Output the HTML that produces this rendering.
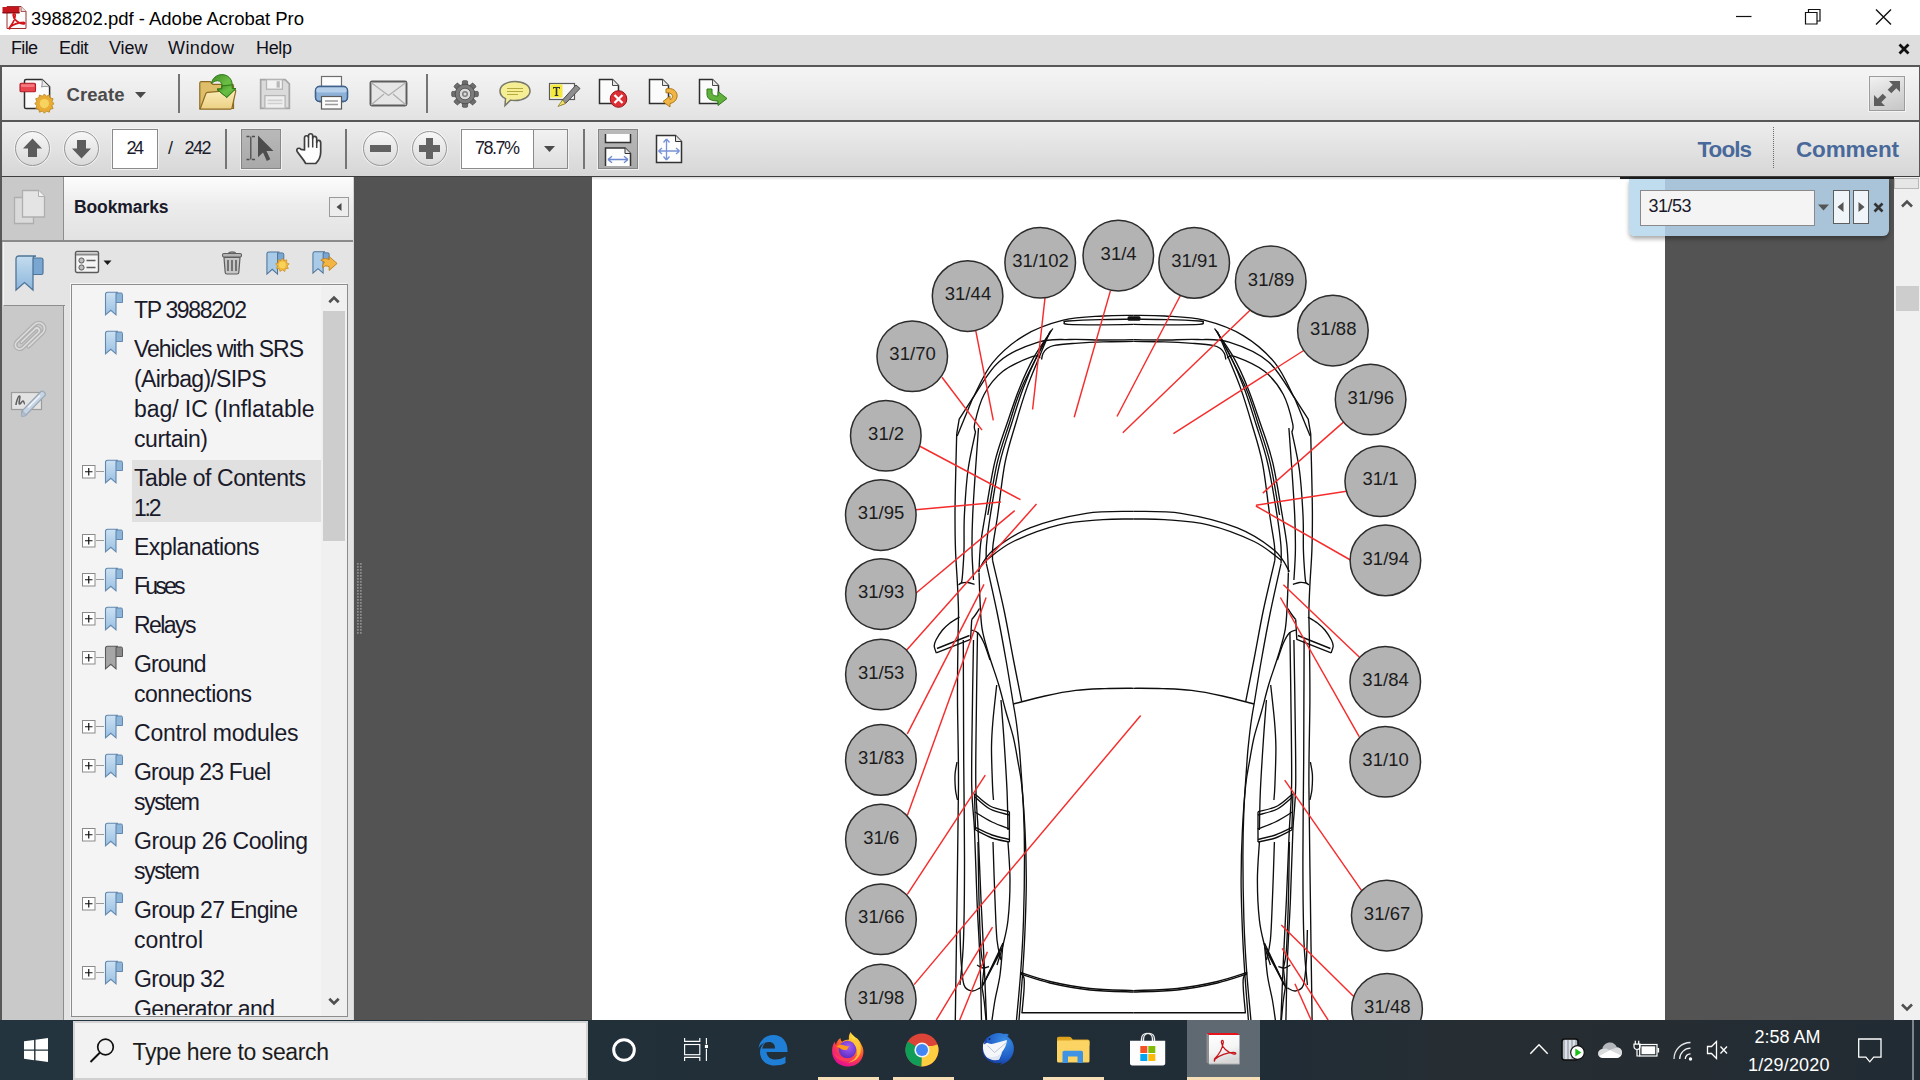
<!DOCTYPE html>
<html>
<head>
<meta charset="utf-8">
<title>3988202.pdf - Adobe Acrobat Pro</title>
<style>
*{box-sizing:border-box;margin:0;padding:0}
html,body{width:1920px;height:1080px;overflow:hidden;background:#fff;font-family:"Liberation Sans",sans-serif;}
#root{position:relative;width:1920px;height:1080px;overflow:hidden}
#root div,#root svg,#root span{position:absolute}
.t{white-space:pre;line-height:1}
.vsep{width:2px;background:#757575}
.rbtn{border-radius:50%;border:1.300px solid #969696;background:linear-gradient(#f7f7f7,#dadada);box-shadow:0 0 0 1px rgba(255,255,255,0.55)}
</style>
</head>
<body>
<div id="root">
<!-- TITLE BAR -->
<div style="left:0;top:0;width:1920px;height:35px;background:#fff"></div>
<svg style="left:2px;top:4px" width="26" height="26" viewBox="0 0 26 26">
  <path d="M5 2.5h14l5 5v17H5z" fill="#fdfdfd" stroke="#9a3030" stroke-width="1"/>
  <path d="M19 2.5v5h5" fill="#e8e0e0" stroke="#9a3030" stroke-width="0.8"/>
  <rect x="0.5" y="3" width="17" height="6" fill="#c5161d"/>
  <rect x="0.5" y="8" width="17" height="1.5" fill="#8e0d12"/>
  <path d="M8 23c3-4 5-8 5.200-11.500c0.200-2.200-2.200-2.400-2-0.200c0.400 4 5 8 10 8.700c2.200 0.200 2-1.800-0.300-1.600c-5 0.300-10 2.300-13 4.800c-1.600 1.600 0.200 2.600 0.100-0.200z" fill="none" stroke="#d4161c" stroke-width="1.7"/>
</svg>
<span class="t" style="left:31px;top:10.04px;font-size:18.5px;color:#000;letter-spacing:-0.020px;">3988202.pdf - Adobe Acrobat Pro</span>
<!-- window controls -->
<svg style="left:1730px;top:5px" width="170" height="26" viewBox="0 0 170 26">
  <path d="M6 11.500h15.500" stroke="#111" stroke-width="1.2" fill="none"/>
  <path d="M75.500 7.500h11.500v11.500h-11.500z M78.500 7.500v-3h11.500v11.500h-3" stroke="#111" stroke-width="1.200" fill="none"/>
  <path d="M146 4.500l15 15M161 4.500l-15 15" stroke="#111" stroke-width="1.4" fill="none"/>
</svg>

<!-- MENU BAR -->
<div style="left:0;top:35px;width:1920px;height:30px;background:#dedede"></div>
<span class="t" style="left:11px;top:39.06px;font-size:18px;color:#10101a;letter-spacing:-0.672px;">File</span>
<span class="t" style="left:59px;top:39.06px;font-size:18px;color:#10101a;letter-spacing:-0.510px;">Edit</span>
<span class="t" style="left:109px;top:39.06px;font-size:18px;color:#10101a;letter-spacing:-0.068px;">View</span>
<span class="t" style="left:168px;top:39.06px;font-size:18px;color:#10101a;letter-spacing:0.394px;">Window</span>
<span class="t" style="left:256px;top:39.06px;font-size:18px;color:#10101a;letter-spacing:-0.344px;">Help</span>
<svg style="left:1897px;top:42px" width="14" height="14" viewBox="0 0 14 14"><path d="M2.500 2.500l9 9M11.500 2.500l-9 9" stroke="#111" stroke-width="2.800" fill="none"/></svg>
<!-- TOOLBAR 1 -->
<div style="left:0;top:65px;width:1920px;height:56px;background:linear-gradient(#f5f5f5 0%,#ececec 50%,#e2e2e2 100%);border:2px solid #585858;border-right:1.500px solid #585858;border-bottom:none"></div>
<!-- create icon -->
<svg style="left:18px;top:76px" width="38" height="38" viewBox="0 0 38 38">
  <path d="M6.500 5c0-1 0.600-1.600 1.600-1.600h16l7.500 7.500v20c0 1-0.600 1.600-1.600 1.600h-21.900c-1 0-1.600-0.600-1.600-1.600z" fill="#fbfbfb" stroke="#2e2e2e" stroke-width="1.500"/>
  <path d="M24 3.500c0.500 3.500 0 6 -0.500 7.500 2 -0.800 5 -0.800 8 0" fill="#e9e9e9" stroke="#8a8a8a" stroke-width="0.900"/>
  <rect x="2" y="7.300" width="15.500" height="8.400" rx="1.300" fill="#e8454e" stroke="#b01e26" stroke-width="1.100"/>
  <rect x="3" y="8.300" width="13.500" height="2.600" rx="1" fill="#f27a80"/>
  <g transform="translate(26.400 27.600)">
  <path d="M0 -9.400l2.300 2.500 3.300-1.400 0.800 3.400 3.500 0.800 -1.400 3.300 2.500 2.300 -2.500 2.300 1.400 3.300 -3.500 0.800 -0.800 3.400 -3.300-1.400 -2.300 2.500 -2.300-2.500 -3.300 1.400 -0.800-3.400 -3.500-0.800 1.400-3.300 -2.500-2.300 2.500-2.300 -1.400-3.300 3.500-0.800 0.800-3.400 3.300 1.400z" transform="scale(0.880) translate(0 -1.500)" fill="#e9ad35" stroke="#b9801a" stroke-width="0.900"/>
  <circle cx="0" cy="0" r="4.600" fill="#f7d460"/>
  </g>
</svg>
<span class="t" style="left:66.5px;top:86.34px;font-size:18.5px;color:#4a4a4a;font-weight:700;letter-spacing:0.081px;">Create</span>
<svg style="left:134px;top:91px" width="14" height="8" viewBox="0 0 14 8"><path d="M1 1h11l-5.500 6z" fill="#4a4a4a"/></svg>
<div class="vsep" style="left:178px;top:74px;height:39px"></div>
<!-- open folder -->
<svg style="left:197px;top:74px" width="42" height="38" viewBox="0 0 42 38">
  <defs><linearGradient id="fg1" x1="0" y1="0" x2="0" y2="1"><stop offset="0" stop-color="#fbedb8"/><stop offset="1" stop-color="#ecd083"/></linearGradient>
  <linearGradient id="ga1" x1="0" y1="0" x2="1" y2="1"><stop offset="0" stop-color="#3f8a22"/><stop offset="0.500" stop-color="#6cbf45"/><stop offset="1" stop-color="#4aa32c"/></linearGradient></defs>
  <path d="M2.800 9.300c0-1 0.500-1.600 1.500-1.600h9l2.500 2.600h19.200c1 0 1.500 0.600 1.500 1.600v22.600h-33.700z" fill="#dfbe69" stroke="#8c6a22" stroke-width="1.200"/>
  <path d="M14.300 9.600c1-5.300 5.400-9 10.600-9 6 0 10.300 4.500 10.300 10.300v3.700h3.600l-9 8.800 -9.600-7.800h4.700v-4.300c0-2.800-1.800-4.500-4.200-4.500 -2.800 0-4.600 1.300-6.400 2.800z" fill="url(#ga1)" stroke="#2f7a1b" stroke-width="1"/>
  <path d="M3 35.200l5.800-15.400c0.300-0.800 1-1.300 1.900-1.400l17-1.600 2.100 5.900 6-6.600 1.500-0.200c1-0.100 1.600 0.600 1.400 1.600l-3.700 16.400c-0.200 0.800-0.800 1.300-1.600 1.300z" fill="url(#fg1)" stroke="#8c6a22" stroke-width="1.200"/>
  <path d="M20.100 14.800h4.700v-4.300l0 0M38.800 14.600l-9 8.800 -9.600-7.800" fill="none" stroke="#2f7a1b" stroke-width="1"/>
  <path d="M24.800 14.800l0.200-3 10.200-0.900v3.700h3.600l-9 8.800 -9.700-7.900z" fill="url(#ga1)" stroke="#2f7a1b" stroke-width="1"/>
</svg>
<!-- save (disabled) -->
<svg style="left:258px;top:76.500px" width="34" height="34" viewBox="0 0 32 32">
  <path d="M2.500 2.500h23l4 4v23h-27z" fill="#dbdbdb" stroke="#a6a6a6" stroke-width="1.600"/>
  <rect x="8" y="2.500" width="15" height="9" fill="#f2f2f2" stroke="#b4b4b4" stroke-width="1.200"/>
  <rect x="17.500" y="4" width="3" height="6" fill="#b8b8b8"/>
  <rect x="6.500" y="17.500" width="19" height="12" fill="#efefef" stroke="#b4b4b4" stroke-width="1.200"/>
  <path d="M9 22h14M9 25h14" stroke="#cfcfcf" stroke-width="1.500"/>
</svg>
<!-- printer -->
<svg style="left:313px;top:74px" width="38" height="38" viewBox="0 0 38 38">
  <rect x="8.500" y="2.500" width="20" height="12" fill="#fcfcfc" stroke="#6e6e6e" stroke-width="1.200"/>
  <rect x="2.500" y="12.500" width="32" height="15" rx="4" fill="#8db1d8" stroke="#3f618c" stroke-width="1.300"/>
  <rect x="2.500" y="12.500" width="32" height="6" rx="3" fill="#b5cfea"/>
  <rect x="2.500" y="12.500" width="32" height="15" rx="4" fill="none" stroke="#3f618c" stroke-width="1.300"/>
  <rect x="8.500" y="22.500" width="20" height="12.500" fill="#fcfcfc" stroke="#5a5a5a" stroke-width="1.200"/>
  <path d="M12 27h13M12 30.500h13" stroke="#9a9a9a" stroke-width="1.400"/>
</svg>
<!-- mail -->
<svg style="left:369px;top:80px" width="40" height="28" viewBox="0 0 40 28">
  <rect x="1.500" y="1.500" width="36" height="24" rx="1.500" fill="#e6e6e6" stroke="#5c5c5c" stroke-width="1.900"/>
  <path d="M2 2.500l17.500 13 17.500-13M2 25l13-11M37 25l-13-11" fill="none" stroke="#b0b0b0" stroke-width="1.300"/>
</svg>
<div class="vsep" style="left:426px;top:74px;height:39px"></div>
<!-- gear -->
<svg style="left:450px;top:79px" width="30" height="30" viewBox="-15 -15 30 30">
  <g fill="#6e6e6e" stroke="#454545" stroke-width="0.700">
    <rect x="-2.600" y="-13.300" width="5.200" height="26.600" rx="1"/>
    <rect x="-2.600" y="-13.300" width="5.200" height="26.600" rx="1" transform="rotate(45)"/>
    <rect x="-2.600" y="-13.300" width="5.200" height="26.600" rx="1" transform="rotate(90)"/>
    <rect x="-2.600" y="-13.300" width="5.200" height="26.600" rx="1" transform="rotate(135)"/>
  </g>
  <circle r="9.800" fill="#757575" stroke="#454545" stroke-width="0.700"/>
  <circle r="9" fill="#7c7c7c"/>
  <circle r="5.800" fill="#d9d9d9" stroke="#555" stroke-width="0.900"/>
  <circle r="3" fill="#7e7e7e"/>
  <circle r="1.500" fill="#d9d9d9"/>
</svg>
<!-- comment bubble -->
<svg style="left:498px;top:80px" width="34" height="28" viewBox="0 0 34 28">
  <path d="M17 1.500c8.500 0 15 4 15 9.500s-6.500 9.500-15 9.500c-1.500 0-3 0-4.500-0.400l-5.500 5.400 0.500-6.800c-3.500-1.700-5.500-4.500-5.500-7.700 0-5.500 6.500-9.500 15-9.500z" fill="#f6ee94" stroke="#77776a" stroke-width="1.500"/>
  <path d="M9 8.500h16M9 11.500h16M9 14.500h11" stroke="#b6a93e" stroke-width="1.200"/>
</svg>
<!-- highlight text -->
<svg style="left:548px;top:80px" width="34" height="30" viewBox="0 0 34 30">
  <rect x="1.500" y="3.500" width="25" height="16" fill="#f7f7f7" stroke="#5a5a5a" stroke-width="1.200"/>
  <rect x="2.500" y="4.500" width="12" height="13" fill="#f5ea3a"/>
  <path d="M5 7h7v2h-0.700v-0.900h-2v7h1v1h-3.600v-1h1v-7h-2v0.900h-0.700z" fill="#333"/>
  <path d="M28 5l4 3.500 -14 14.500 -5 2 1.500-5z" fill="#8e8e8e" stroke="#4a4a4a" stroke-width="1"/>
  <path d="M14.500 20l-4.500 6.500 7.500-3z" fill="#f3e36a" stroke="#8a7a2a" stroke-width="0.800"/>
</svg>
<!-- doc delete -->
<svg style="left:597px;top:77px" width="34" height="34" viewBox="0 0 34 34">
  <path d="M2.500 2.500h13l6 6v18h-19z" fill="#fbfbfb" stroke="#2e2e2e" stroke-width="1.500"/>
  <path d="M15.500 2.500v6h6" fill="#e6e6e6" stroke="#4a4a4a" stroke-width="1"/>
  <circle cx="21.500" cy="22" r="8.300" fill="#dc2f36" stroke="#9a1218" stroke-width="1"/>
  <path d="M17.500 18l8 8M25.500 18l-8 8" stroke="#fff" stroke-width="2.300"/>
</svg>
<!-- doc rotate -->
<svg style="left:647px;top:77px" width="34" height="34" viewBox="0 0 34 34">
  <path d="M2.500 2.500h13l6 6v18h-19z" fill="#fbfbfb" stroke="#2e2e2e" stroke-width="1.500"/>
  <path d="M15.500 2.500v6h6" fill="#e6e6e6" stroke="#4a4a4a" stroke-width="1"/>
  <path d="M19 12c6-2 12 2 11 8 -0.700 4-4 6-7 6.500v3.500l-7-5.500 7-5.500v3.500c3-0.500 4-5-0.500-6.500 -2-0.500-3.500 0-3.500 0z" fill="#f0b545" stroke="#b07a1a" stroke-width="1"/>
</svg>
<!-- doc extract arrow -->
<svg style="left:697px;top:77px" width="34" height="34" viewBox="0 0 34 34">
  <path d="M2.500 2.500h13l6 6v18h-19z" fill="#fbfbfb" stroke="#2e2e2e" stroke-width="1.500"/>
  <path d="M15.500 2.500v6h6" fill="#e6e6e6" stroke="#4a4a4a" stroke-width="1"/>
  <path d="M10 12v5c0 5 4 7 11 7v4.500l9-7 -9-7v4.500c-4 0-6-1-6-4v-3z" fill="#62b13c" stroke="#2f7a1b" stroke-width="1"/>
</svg>
<!-- fullscreen button -->
<div style="left:1869px;top:76px;width:36px;height:35px;background:linear-gradient(160deg,#f2f2f2 0%,#dcdcdc 45%,#c6c6c6 100%);border:1px solid #9c9c9c;box-shadow:0 0 0 1px #f4f4f4"></div>
<svg style="left:1871px;top:78px" width="32" height="31" viewBox="0 0 32 31">
  <path d="M18 3h11v11l-3.700-3.700 -5 5 -3.600-3.600 5-5z" fill="#5e5e5e"/>
  <path d="M14 28h-11v-11l3.700 3.700 5-5 3.600 3.600 -5 5z" fill="#5e5e5e"/>
</svg>
<!-- TOOLBAR 2 -->
<div style="left:0;top:120px;width:1920px;height:58px;background:linear-gradient(#ededed 0%,#e2e2e2 50%,#d6d6d6 100%);border:2px solid #585858;border-right:1.500px solid #585858;border-bottom:2.500px solid #3e3e3e"></div>
<!-- up / down -->
<div class="rbtn" style="left:15px;top:131px;width:35px;height:35px"></div>
<svg style="left:15px;top:131px" width="35" height="35" viewBox="0 0 35 35"><path d="M17.500 7.500l9.500 10h-5v8.500h-9v-8.500h-5z" fill="#5c5c5c"/></svg>
<div class="rbtn" style="left:64px;top:131px;width:35px;height:35px"></div>
<svg style="left:64px;top:131px" width="35" height="35" viewBox="0 0 35 35"><path d="M17.500 27.500l9.500-10h-5v-8.500h-9v8.500h-5z" fill="#5c5c5c"/></svg>
<!-- page number box -->
<div style="left:112px;top:129px;width:46px;height:40px;background:#fff;border:1.500px solid #8a8a8a;box-shadow:0 0 0 1px #f2f2f2"></div>
<span class="t" style="left:126.5px;top:139.36px;font-size:18px;color:#1a1a2a;letter-spacing:-2.531px;">24</span>
<span class="t" style="left:168px;top:139.36px;font-size:18px;color:#1a1a2a;letter-spacing:0.984px;">/</span>
<span class="t" style="left:184.5px;top:139.36px;font-size:18px;color:#1a1a2a;letter-spacing:-1.523px;">242</span>
<div class="vsep" style="left:225px;top:129px;height:40px"></div>
<!-- select tool (active) -->
<div style="left:241px;top:129px;width:40px;height:40px;background:linear-gradient(#b9b9b9,#a9a9a9);border:1.500px solid #868686;box-shadow:0 0 0 1px #f0f0f0"></div>
<svg style="left:243px;top:131px" width="36" height="36" viewBox="0 0 36 36">
  <path d="M3.500 5.500h3M9 5.500h3M7.800 5.500v23M3.500 28.500h3M9 28.500h3" stroke="#4d4d4d" stroke-width="1.300" fill="none"/>
  <path d="M15 4.500l15.500 15.500h-7l3.800 8.300 -3.500 1.600 -3.800-8.400 -5 4.800z" fill="#4d4d4d"/>
</svg>
<!-- hand -->
<svg style="left:294px;top:131px" width="34" height="36" viewBox="0 0 34 36">
  <path d="M10.500 19v-12c0-3 4-3 4 0v-2c0-3 4.200-3 4.200 0v2.500c0-3 4-3 4 0.300v3.700c0-3 4-2.700 4 0.500v9c0 7-3 9.500-5 11.500h-10c-2-4-6-8-8.500-12 -1.500-2.800 1.800-4.300 3.800-2.200z" fill="#fdfdfd" stroke="#3e3e3e" stroke-width="1.700" stroke-linejoin="round"/>
  <path d="M14.500 7.500v9M18.700 7.500v9M22.700 10.500v6.500" stroke="#3e3e3e" stroke-width="1.500" fill="none"/>
</svg>
<div class="vsep" style="left:345px;top:129px;height:40px"></div>
<!-- zoom - / + -->
<div class="rbtn" style="left:363px;top:131px;width:35px;height:35px"></div>
<div style="left:370px;top:145px;width:21px;height:7px;background:#626262"></div>
<div class="rbtn" style="left:412px;top:131px;width:35px;height:35px"></div>
<div style="left:419px;top:145px;width:21px;height:7px;background:#626262"></div>
<div style="left:426px;top:138px;width:7px;height:21px;background:#626262"></div>
<!-- zoom box -->
<div style="left:460.500px;top:129px;width:107px;height:40px;background:#fff;border:1.500px solid #8a8a8a;box-shadow:0 0 0 1px #f2f2f2"></div>
<div style="left:532.500px;top:130px;width:34px;height:38px;background:linear-gradient(#f2f2f2,#dedede);border-left:1.500px solid #8a8a8a"></div>
<span class="t" style="left:475px;top:139.36px;font-size:18px;color:#1a1a2a;letter-spacing:-1.512px;">78.7%</span>
<svg style="left:543px;top:145px" width="14" height="8" viewBox="0 0 14 8"><path d="M1 1h11l-5.500 6z" fill="#4a4a4a"/></svg>
<div class="vsep" style="left:583px;top:129px;height:40px"></div>
<!-- fit width (active) -->
<div style="left:598px;top:129px;width:40px;height:40px;background:linear-gradient(#b9b9b9,#a9a9a9);border:1.500px solid #868686;box-shadow:0 0 0 1px #f0f0f0"></div>
<svg style="left:600px;top:131px" width="36" height="36" viewBox="0 0 36 36">
  <path d="M5.500 3v8.500h25v-8.500" fill="#fdfdfd" stroke="#333" stroke-width="1.500"/>
  <path d="M5.500 35v-18h19.500l5.500 5.500v12.500" fill="#fdfdfd" stroke="#333" stroke-width="1.500"/>
  <path d="M25 17v5.500h5.500" fill="#e4e4e4" stroke="#333" stroke-width="1"/>
  <path d="M8 28.500h20M8 28.500l4-3.300M8 28.500l4 3.300M28 28.500l-4-3.300M28 28.500l-4 3.300" stroke="#6d88d2" stroke-width="1.400" fill="none"/>
</svg>
<!-- fit page -->
<svg style="left:654px;top:133px" width="30" height="32" viewBox="0 0 30 32">
  <path d="M2.500 2.500h19l6 6v21h-25z" fill="#fdfdfd" stroke="#333" stroke-width="1.500"/>
  <path d="M21.500 2.500v6h6" fill="#e4e4e4" stroke="#333" stroke-width="1"/>
  <path d="M12.500 6v21M12.500 6l-3 3.500M12.500 6l3 3.500M12.500 27l-3-3.500M12.500 27l3-3.500M4.500 18h21M4.500 18l3.500-3M4.500 18l3.500 3M25.500 18l-3.500-3M25.500 18l-3.500 3" stroke="#7892d8" stroke-width="1.300" fill="none"/>
</svg>
<!-- Tools | Comment -->
<span class="t" style="left:1697.5px;top:138.75px;font-size:22.5px;color:#48699a;font-weight:700;letter-spacing:-0.957px;">Tools</span>
<div style="left:1773px;top:127px;width:0;height:41px;border-left:1.800px dotted #6a6a6a"></div>
<span class="t" style="left:1796px;top:138.75px;font-size:22.5px;color:#48699a;font-weight:700;letter-spacing:-0.128px;">Comment</span>
<!-- LEFT PANEL -->
<div style="left:0;top:177px;width:354px;height:843px;background:#e4e4e4;border-left:2px solid #585858"></div>
<div style="left:2px;top:177px;width:62px;height:843px;background:#c9c9c9;border-right:1.500px solid #8e8e8e"></div>
<div style="left:64px;top:177px;width:290px;height:64px;background:linear-gradient(#fdfdfd 0%,#ececec 45%,#e2e2e2 100%)"></div>
<div style="left:2px;top:240px;width:352px;height:2px;background:#8a8a8a"></div>
<div style="left:3px;top:242px;width:62px;height:64px;background:#e4e4e4;border-bottom:1.500px solid #8e8e8e;border-left:1px solid #f4f4f4"></div>
<div style="left:352.500px;top:177px;width:1.500px;height:843px;background:#d4d4d4"></div>
<svg style="left:12px;top:188px" width="36" height="40" viewBox="0 0 36 40">
<path d="M2.500 9.500h19v26h-19z" fill="#dadada" stroke="#aeaeae" stroke-width="1.300"/>
<path d="M10.500 2.500h16l6 6v20.500h-22z" fill="#e4e4e4" stroke="#aeaeae" stroke-width="1.300"/>
<path d="M26.500 2.500v6h6" fill="#f2f2f2" stroke="#aeaeae" stroke-width="1"/>
</svg>
<svg style="left:13px;top:254px" width="32" height="40" viewBox="0 0 32 40">
<defs><linearGradient id="bk" x1="0" y1="0" x2="0" y2="1"><stop offset="0" stop-color="#c4dcef"/><stop offset="1" stop-color="#8db7dc"/></linearGradient></defs>
<path d="M19 4h9c1.500 0 2 0.800 2 2v13c0 1-0.600 1.500-1.500 1.500h-9.500z" fill="#7aa7d2" stroke="#4f7599" stroke-width="1.200"/>
<path d="M3 5c0-2 1-3 3-3h17c-2 0-3 1-3 3v31l-8.500-7.500 -8.500 7.500z" fill="url(#bk)" stroke="#4f7599" stroke-width="1.300"/>
</svg>
<svg style="left:10px;top:318px" width="40" height="40" viewBox="0 0 40 40">
<path d="M11.500 24l13.500-13c2.500-2.500 6 0.800 3.500 3.500l-15.500 15c-4.500 4.500-10.500-1.500-6-6l17-16.500c6-6 14.500 2 8.500 8l-14 13.500" fill="none" stroke="#b0b0b0" stroke-width="4.200" stroke-linecap="round"/>
<path d="M11.500 24l13.500-13c2.500-2.500 6 0.800 3.500 3.500l-15.500 15c-4.500 4.500-10.500-1.500-6-6l17-16.500c6-6 14.500 2 8.500 8l-14 13.500" fill="none" stroke="#dcdcdc" stroke-width="1.700" stroke-linecap="round"/>
</svg>
<svg style="left:9px;top:386px" width="40" height="36" viewBox="0 0 40 36">
<rect x="2.500" y="6.500" width="30" height="17" fill="#e3e3e3" stroke="#9c9c9c" stroke-width="1.200"/>
<path d="M7 19c0-2 2-9 3.500-9s-1.500 8 0 8 2-3 3.500-3 0.500 3 2 3" fill="none" stroke="#5e5e5e" stroke-width="1.500"/>
<path d="M32 5.500c1.500-1.500 5.500 2 4 4l-19 19.500c-1.500 1.500-5.500-2.500-4-4z" fill="#c6d4e3" stroke="#98a6b6" stroke-width="1.100"/>
<path d="M13.500 25c-1 1-1.500 5-1 5.500s4-0.300 5-1.500z" fill="#aebccc" stroke="#98a6b6" stroke-width="0.800"/>
<path d="M31 9.500l-12 12" stroke="#f2f6fa" stroke-width="1.600"/>
</svg>
<svg width="0" height="0" style="left:0;top:0"><defs><linearGradient id="bks" x1="0" y1="0" x2="0" y2="1"><stop offset="0" stop-color="#cde2f3"/><stop offset="1" stop-color="#9ac0e2"/></linearGradient></defs></svg>
<span class="t" style="left:74px;top:198.69px;font-size:17.5px;color:#1a1a2a;font-weight:700;letter-spacing:-0.104px;">Bookmarks</span>
<div style="left:329px;top:197px;width:20px;height:20px;background:#ededed;border:1.500px solid #9a9a9a"></div>
<svg style="left:334px;top:202px" width="10" height="10" viewBox="0 0 10 10"><path d="M7.500 1v8l-5-4z" fill="#4a4a4a"/></svg>
<svg style="left:74px;top:250px" width="40" height="26" viewBox="0 0 40 26">
<rect x="1.500" y="1.500" width="23" height="21" rx="1.500" fill="#f4f4f4" stroke="#5a5a5a" stroke-width="1.400"/>
<path d="M2 4.500h22" stroke="#8a8a8a" stroke-width="2"/>
<circle cx="7.500" cy="10.500" r="2.600" fill="#bdbdbd" stroke="#5a5a5a" stroke-width="1"/>
<circle cx="7.500" cy="17.500" r="2.600" fill="#bdbdbd" stroke="#5a5a5a" stroke-width="1"/>
<path d="M12.500 10.500h9M12.500 17.500h9" stroke="#5a5a5a" stroke-width="1.400"/>
<path d="M29.500 10.500h8l-4 4.500z" fill="#1a1a1a"/>
</svg>
<svg style="left:221px;top:250px" width="22" height="26" viewBox="0 0 22 26">
<path d="M7.500 3.500c0-2 7-2 7 0" fill="none" stroke="#6a6a6a" stroke-width="1.300"/>
<rect x="1.500" y="3.500" width="19" height="3.500" rx="1.500" fill="#b4b4b4" stroke="#5e5e5e" stroke-width="1.100"/>
<path d="M3 7.500h16l-1.200 15c0 1-0.800 1.500-1.800 1.500h-10c-1 0-1.800-0.500-1.800-1.500z" fill="#c6c6c6" stroke="#5e5e5e" stroke-width="1.200"/>
<path d="M7 10v11M11 10v11M15 10v11" stroke="#5e5e5e" stroke-width="1.600"/>
</svg>
<svg style="left:265px;top:250px" width="27" height="27" viewBox="0 0 28 28">
<path d="M12 3h6c1 0 1.500 0.500 1.500 1.500v8h-7.500z" fill="#7aa7d2" stroke="#4f7599" stroke-width="1"/>
<path d="M2 4c0-1.500 0.800-2 2-2h11c-1.200 0-2 0.800-2 2v21l-5.500-5 -5.500 5z" fill="#a9cbe8" stroke="#4f7599" stroke-width="1.100"/>
<path d="M18 8.500l1.700 2.500 2.900-0.800 -0.300 3 2.800 1.200 -2.200 2.100 1.300 2.700 -3 0.200 -0.700 2.900 -2.500-1.600 -2.500 1.600 -0.700-2.900 -3-0.200 1.300-2.700 -2.200-2.100 2.800-1.200 -0.300-3 2.900 0.800z" fill="#f0b73a" stroke="#c98a1c" stroke-width="0.700"/>
<circle cx="18" cy="15.500" r="3.500" fill="#f8d25a"/>
</svg>
<svg style="left:311px;top:250px" width="28" height="26" viewBox="0 0 30 28">
<path d="M12 3h6c1 0 1.500 0.500 1.500 1.500v8h-7.500z" fill="#7aa7d2" stroke="#4f7599" stroke-width="1"/>
<path d="M2 4c0-1.500 0.800-2 2-2h11c-1.200 0-2 0.800-2 2v21l-5.500-5 -5.500 5z" fill="#a9cbe8" stroke="#4f7599" stroke-width="1.100"/>
<path d="M10.500 11c2-2 6-2.500 9-0.500v-3.500l8.500 7.500 -8.500 7.500v-4c-3-1.500-5-1-7 1 0-2.500 0.500-4.500 2-6 -1.500-1-3-1.500-4-2z" fill="#f3b544" stroke="#b87a14" stroke-width="0.900"/>
</svg>
<div style="left:71px;top:284px;width:277px;height:732.500px;background:#f4f4f4;border:1.500px solid #8c8c8c;box-shadow:-1px -1px 0 0 #f6f6f6;overflow:hidden"></div>
<div style="left:321px;top:286px;width:25.500px;height:730px;background:#f0f0f0"></div>
<div style="left:323px;top:311px;width:22px;height:230px;background:#cdcdcd"></div>
<svg style="left:326px;top:293px" width="16" height="12" viewBox="0 0 16 12"><path d="M3.300 9.300l4.700-4.700 4.700 4.700" fill="none" stroke="#505050" stroke-width="2.700"/></svg>
<svg style="left:326px;top:996px" width="16" height="12" viewBox="0 0 16 12"><path d="M3.300 2.700l4.700 4.700 4.700-4.700" fill="none" stroke="#505050" stroke-width="2.700"/></svg>
<svg style="left:104px;top:291px" width="20" height="27" viewBox="0 0 20 27"><path d="M11 2h6c1 0 1.500 0.500 1.500 1.500v8h-7.500z" fill="#8db4d9" stroke="#6288ae" stroke-width="1"/><path d="M1.500 3.500c0-1.500 0.800-2.200 2-2.200h10.500c-1.200 0-2 0.800-2 2.200v20.300l-5.200-4.500 -5.300 4.500z" fill="url(#bks)" stroke="#6288ae" stroke-width="1.100"/></svg>
<span class="t" style="left:134px;top:298.63px;font-size:23px;color:#1a1a2a;letter-spacing:-1.323px;">TP 3988202</span>
<svg style="left:104px;top:330px" width="20" height="27" viewBox="0 0 20 27"><path d="M11 2h6c1 0 1.500 0.500 1.500 1.500v8h-7.500z" fill="#8db4d9" stroke="#6288ae" stroke-width="1"/><path d="M1.500 3.500c0-1.500 0.800-2.200 2-2.200h10.500c-1.200 0-2 0.800-2 2.200v20.300l-5.200-4.500 -5.300 4.500z" fill="url(#bks)" stroke="#6288ae" stroke-width="1.100"/></svg>
<span class="t" style="left:134px;top:337.63px;font-size:23px;color:#1a1a2a;letter-spacing:-1.040px;">Vehicles with SRS</span>
<span class="t" style="left:134px;top:367.63px;font-size:23px;color:#1a1a2a;letter-spacing:-0.676px;">(Airbag)/SIPS</span>
<span class="t" style="left:134px;top:397.63px;font-size:23px;color:#1a1a2a;letter-spacing:-0.059px;">bag/ IC (Inflatable</span>
<span class="t" style="left:134px;top:427.63px;font-size:23px;color:#1a1a2a;letter-spacing:-0.386px;">curtain)</span>
<div style="left:132px;top:459.8px;width:189px;height:62.4px;background:#e0e0e0"></div>
<svg style="left:104px;top:459px" width="20" height="27" viewBox="0 0 20 27"><path d="M11 2h6c1 0 1.500 0.500 1.500 1.500v8h-7.500z" fill="#8db4d9" stroke="#6288ae" stroke-width="1"/><path d="M1.500 3.500c0-1.500 0.800-2.200 2-2.200h10.500c-1.200 0-2 0.800-2 2.200v20.300l-5.200-4.500 -5.300 4.500z" fill="url(#bks)" stroke="#6288ae" stroke-width="1.100"/></svg>
<div style="left:96px;top:471.1px;width:8px;height:1px;background:#9a9a9a"></div>
<svg style="left:82px;top:464.6px" width="14" height="14" viewBox="0 0 14 14"><rect x="0.500" y="0.500" width="12.500" height="12.500" fill="#fff" stroke="#8a8a8a"/><path d="M3 6.750h7.500M6.750 3v7.500" stroke="#111" stroke-width="1.200"/></svg>
<span class="t" style="left:134px;top:466.63px;font-size:23px;color:#1a1a2a;letter-spacing:-0.438px;">Table of Contents</span>
<span class="t" style="left:134px;top:496.63px;font-size:23px;color:#1a1a2a;letter-spacing:-2.242px;">1:2</span>
<svg style="left:104px;top:528px" width="20" height="27" viewBox="0 0 20 27"><path d="M11 2h6c1 0 1.500 0.500 1.500 1.500v8h-7.500z" fill="#8db4d9" stroke="#6288ae" stroke-width="1"/><path d="M1.500 3.500c0-1.500 0.800-2.200 2-2.200h10.500c-1.200 0-2 0.800-2 2.200v20.300l-5.200-4.500 -5.300 4.500z" fill="url(#bks)" stroke="#6288ae" stroke-width="1.100"/></svg>
<div style="left:96px;top:540.1px;width:8px;height:1px;background:#9a9a9a"></div>
<svg style="left:82px;top:533.6px" width="14" height="14" viewBox="0 0 14 14"><rect x="0.500" y="0.500" width="12.500" height="12.500" fill="#fff" stroke="#8a8a8a"/><path d="M3 6.750h7.500M6.750 3v7.500" stroke="#111" stroke-width="1.200"/></svg>
<span class="t" style="left:134px;top:535.63px;font-size:23px;color:#1a1a2a;letter-spacing:-0.564px;">Explanations</span>
<svg style="left:104px;top:567px" width="20" height="27" viewBox="0 0 20 27"><path d="M11 2h6c1 0 1.500 0.500 1.500 1.500v8h-7.500z" fill="#8db4d9" stroke="#6288ae" stroke-width="1"/><path d="M1.500 3.500c0-1.500 0.800-2.200 2-2.200h10.500c-1.200 0-2 0.800-2 2.200v20.300l-5.200-4.500 -5.300 4.500z" fill="url(#bks)" stroke="#6288ae" stroke-width="1.100"/></svg>
<div style="left:96px;top:579.1px;width:8px;height:1px;background:#9a9a9a"></div>
<svg style="left:82px;top:572.6px" width="14" height="14" viewBox="0 0 14 14"><rect x="0.500" y="0.500" width="12.500" height="12.500" fill="#fff" stroke="#8a8a8a"/><path d="M3 6.750h7.500M6.750 3v7.500" stroke="#111" stroke-width="1.200"/></svg>
<span class="t" style="left:134px;top:574.63px;font-size:23px;color:#1a1a2a;letter-spacing:-2.785px;">Fuses</span>
<svg style="left:104px;top:606px" width="20" height="27" viewBox="0 0 20 27"><path d="M11 2h6c1 0 1.500 0.500 1.500 1.500v8h-7.500z" fill="#8db4d9" stroke="#6288ae" stroke-width="1"/><path d="M1.500 3.500c0-1.500 0.800-2.200 2-2.200h10.500c-1.200 0-2 0.800-2 2.200v20.300l-5.200-4.500 -5.300 4.500z" fill="url(#bks)" stroke="#6288ae" stroke-width="1.100"/></svg>
<div style="left:96px;top:618.1px;width:8px;height:1px;background:#9a9a9a"></div>
<svg style="left:82px;top:611.6px" width="14" height="14" viewBox="0 0 14 14"><rect x="0.500" y="0.500" width="12.500" height="12.500" fill="#fff" stroke="#8a8a8a"/><path d="M3 6.750h7.500M6.750 3v7.500" stroke="#111" stroke-width="1.200"/></svg>
<span class="t" style="left:134px;top:613.63px;font-size:23px;color:#1a1a2a;letter-spacing:-1.562px;">Relays</span>
<svg style="left:104px;top:645px" width="20" height="27" viewBox="0 0 20 27"><path d="M11 2h6c1 0 1.500 0.500 1.500 1.500v8h-7.500z" fill="#8a8a8a" stroke="#5a5a5a" stroke-width="1"/><path d="M1.500 3.500c0-1.500 0.800-2.200 2-2.200h10.500c-1.200 0-2 0.800-2 2.200v20.300l-5.200-4.500 -5.300 4.500z" fill="#a6a6a6" stroke="#5a5a5a" stroke-width="1.100"/></svg>
<div style="left:96px;top:657.1px;width:8px;height:1px;background:#9a9a9a"></div>
<svg style="left:82px;top:650.6px" width="14" height="14" viewBox="0 0 14 14"><rect x="0.500" y="0.500" width="12.500" height="12.500" fill="#fff" stroke="#8a8a8a"/><path d="M3 6.750h7.500M6.750 3v7.500" stroke="#111" stroke-width="1.200"/></svg>
<span class="t" style="left:134px;top:652.63px;font-size:23px;color:#1a1a2a;letter-spacing:-0.844px;">Ground</span>
<span class="t" style="left:134px;top:682.63px;font-size:23px;color:#1a1a2a;letter-spacing:-0.475px;">connections</span>
<svg style="left:104px;top:714px" width="20" height="27" viewBox="0 0 20 27"><path d="M11 2h6c1 0 1.500 0.500 1.500 1.500v8h-7.500z" fill="#8db4d9" stroke="#6288ae" stroke-width="1"/><path d="M1.500 3.500c0-1.500 0.800-2.200 2-2.200h10.500c-1.200 0-2 0.800-2 2.200v20.300l-5.200-4.500 -5.300 4.500z" fill="url(#bks)" stroke="#6288ae" stroke-width="1.100"/></svg>
<div style="left:96px;top:726.1px;width:8px;height:1px;background:#9a9a9a"></div>
<svg style="left:82px;top:719.6px" width="14" height="14" viewBox="0 0 14 14"><rect x="0.500" y="0.500" width="12.500" height="12.500" fill="#fff" stroke="#8a8a8a"/><path d="M3 6.750h7.500M6.750 3v7.500" stroke="#111" stroke-width="1.200"/></svg>
<span class="t" style="left:134px;top:721.63px;font-size:23px;color:#1a1a2a;letter-spacing:-0.212px;">Control modules</span>
<svg style="left:104px;top:753px" width="20" height="27" viewBox="0 0 20 27"><path d="M11 2h6c1 0 1.500 0.500 1.500 1.500v8h-7.500z" fill="#8db4d9" stroke="#6288ae" stroke-width="1"/><path d="M1.500 3.500c0-1.500 0.800-2.200 2-2.200h10.500c-1.200 0-2 0.800-2 2.200v20.300l-5.200-4.500 -5.300 4.500z" fill="url(#bks)" stroke="#6288ae" stroke-width="1.100"/></svg>
<div style="left:96px;top:765.1px;width:8px;height:1px;background:#9a9a9a"></div>
<svg style="left:82px;top:758.6px" width="14" height="14" viewBox="0 0 14 14"><rect x="0.500" y="0.500" width="12.500" height="12.500" fill="#fff" stroke="#8a8a8a"/><path d="M3 6.750h7.500M6.750 3v7.500" stroke="#111" stroke-width="1.200"/></svg>
<span class="t" style="left:134px;top:760.63px;font-size:23px;color:#1a1a2a;letter-spacing:-0.836px;">Group 23 Fuel</span>
<span class="t" style="left:134px;top:790.63px;font-size:23px;color:#1a1a2a;letter-spacing:-1.369px;">system</span>
<svg style="left:104px;top:822px" width="20" height="27" viewBox="0 0 20 27"><path d="M11 2h6c1 0 1.500 0.500 1.500 1.500v8h-7.500z" fill="#8db4d9" stroke="#6288ae" stroke-width="1"/><path d="M1.500 3.500c0-1.500 0.800-2.200 2-2.200h10.500c-1.200 0-2 0.800-2 2.200v20.300l-5.200-4.500 -5.300 4.500z" fill="url(#bks)" stroke="#6288ae" stroke-width="1.100"/></svg>
<div style="left:96px;top:834.1px;width:8px;height:1px;background:#9a9a9a"></div>
<svg style="left:82px;top:827.6px" width="14" height="14" viewBox="0 0 14 14"><rect x="0.500" y="0.500" width="12.500" height="12.500" fill="#fff" stroke="#8a8a8a"/><path d="M3 6.750h7.500M6.750 3v7.500" stroke="#111" stroke-width="1.200"/></svg>
<span class="t" style="left:134px;top:829.63px;font-size:23px;color:#1a1a2a;letter-spacing:-0.420px;">Group 26 Cooling</span>
<span class="t" style="left:134px;top:859.63px;font-size:23px;color:#1a1a2a;letter-spacing:-1.369px;">system</span>
<svg style="left:104px;top:891px" width="20" height="27" viewBox="0 0 20 27"><path d="M11 2h6c1 0 1.500 0.500 1.500 1.500v8h-7.500z" fill="#8db4d9" stroke="#6288ae" stroke-width="1"/><path d="M1.500 3.500c0-1.500 0.800-2.200 2-2.200h10.500c-1.200 0-2 0.800-2 2.200v20.300l-5.200-4.500 -5.300 4.500z" fill="url(#bks)" stroke="#6288ae" stroke-width="1.100"/></svg>
<div style="left:96px;top:903.1px;width:8px;height:1px;background:#9a9a9a"></div>
<svg style="left:82px;top:896.6px" width="14" height="14" viewBox="0 0 14 14"><rect x="0.500" y="0.500" width="12.500" height="12.500" fill="#fff" stroke="#8a8a8a"/><path d="M3 6.750h7.500M6.750 3v7.500" stroke="#111" stroke-width="1.200"/></svg>
<span class="t" style="left:134px;top:898.63px;font-size:23px;color:#1a1a2a;letter-spacing:-0.708px;">Group 27 Engine</span>
<span class="t" style="left:134px;top:928.63px;font-size:23px;color:#1a1a2a;letter-spacing:-0.008px;">control</span>
<svg style="left:104px;top:960px" width="20" height="27" viewBox="0 0 20 27"><path d="M11 2h6c1 0 1.500 0.500 1.500 1.500v8h-7.500z" fill="#8db4d9" stroke="#6288ae" stroke-width="1"/><path d="M1.500 3.500c0-1.500 0.800-2.200 2-2.200h10.500c-1.200 0-2 0.800-2 2.200v20.300l-5.200-4.500 -5.300 4.500z" fill="url(#bks)" stroke="#6288ae" stroke-width="1.100"/></svg>
<div style="left:96px;top:972.1px;width:8px;height:1px;background:#9a9a9a"></div>
<svg style="left:82px;top:965.6px" width="14" height="14" viewBox="0 0 14 14"><rect x="0.500" y="0.500" width="12.500" height="12.500" fill="#fff" stroke="#8a8a8a"/><path d="M3 6.750h7.500M6.750 3v7.500" stroke="#111" stroke-width="1.200"/></svg>
<span class="t" style="left:134px;top:967.63px;font-size:23px;color:#1a1a2a;letter-spacing:-0.701px;">Group 32</span>
<div style="left:72px;top:989.1px;width:249px;height:26.4px;overflow:hidden"><span class="t" style="left:62px;top:8.53px;font-size:23px;color:#1a1a2a;letter-spacing:-0.611px;">Generator and</span></div>
<!-- DOC AREA -->
<div style="left:354px;top:177px;width:1540px;height:843px;background:#535353"></div>
<div style="left:592px;top:177px;width:1073px;height:843px;background:#fff"></div>
<div style="left:592px;top:177px;width:1073px;height:3px;background:linear-gradient(#d8d8d8,#fff)"></div>
<svg style="left:592px;top:177px" width="1073" height="843" viewBox="592 177 1073 843">
<g fill="none" stroke="#0e0e0e" stroke-width="1.350" stroke-linejoin="round"><g><path d="M955.3 1020.0C955.6 1000.0 956.5 939.2 957.0 900.0C957.5 860.8 958.4 818.3 958.5 785.0C958.6 751.7 957.6 724.2 957.5 700.0C957.4 675.8 957.8 654.7 958.0 640.0C958.2 625.3 958.6 621.2 958.5 612.0C958.4 602.8 958.0 595.3 957.5 585.0C957.0 574.7 955.9 561.7 955.5 550.0C955.1 538.3 955.0 528.3 955.0 515.0C955.0 501.7 955.5 483.5 955.8 470.0C956.1 456.5 956.6 439.8 956.7 433.8"/><path d="M956.7 433.8L959.2 419.2L973.8 396.3"/><path d="M973.8 396.3C976.9 390.7 984.2 373.0 992.5 362.9C1000.8 352.8 1012.0 342.9 1023.8 335.8C1035.6 328.7 1050.1 323.5 1063.3 320.2C1076.5 316.9 1091.2 316.8 1102.9 316.0C1114.6 315.2 1128.6 315.5 1133.7 315.4"/><path d="M957.2 436.0L972.7 398.3"/><path d="M972.7 398.3C977.1 392.2 987.9 371.3 998.8 361.9C1009.7 352.5 1026.4 345.8 1038.3 342.1C1050.2 338.4 1059.0 339.9 1070.0 339.5C1081.0 339.1 1093.4 340.0 1104.0 340.0C1114.6 340.0 1128.8 339.7 1133.7 339.6"/><path d="M975.5 432.0C975.4 430.6 973.3 429.6 974.8 423.3C976.2 417.0 979.5 402.9 984.2 394.2C988.9 385.5 994.9 377.6 1002.9 371.3C1010.9 365.1 1025.8 359.0 1032.1 356.7C1038.3 354.4 1039.0 357.5 1040.4 357.7"/><path d="M1041.5 359.5C1041.8 358.5 1042.1 355.3 1043.0 353.5C1043.9 351.7 1045.1 349.9 1047.0 348.5C1048.9 347.1 1049.8 346.2 1054.5 345.3C1059.2 344.4 1066.9 343.9 1075.0 343.3C1083.1 342.7 1093.1 342.1 1102.9 341.8C1112.7 341.5 1128.6 341.5 1133.7 341.4"/><path d="M1052.9 328.5C1049.8 333.2 1039.8 346.8 1034.2 356.7C1028.7 366.6 1024.1 376.8 1019.6 387.9C1015.1 399.0 1011.3 410.8 1007.1 423.3C1002.9 435.8 998.2 447.6 994.6 462.9C991.0 478.2 987.6 501.3 985.2 515.0C982.9 528.7 981.5 535.5 980.5 545.0C979.5 554.5 979.2 567.5 979.0 572.0"/><path d="M1051.5 330.0C1049.0 334.4 1041.4 347.1 1036.7 356.7C1032.0 366.3 1027.5 376.8 1023.3 387.9C1019.1 399.0 1015.6 410.8 1011.7 423.3C1007.8 435.8 1003.3 447.6 999.8 462.9C996.2 478.2 992.6 501.3 990.4 515.0C988.2 528.7 987.2 537.0 986.5 545.0C985.8 553.0 986.3 560.0 986.3 563.0"/><path d="M1050.0 331.5C1048.2 335.7 1043.2 347.3 1039.4 356.7C1035.6 366.1 1030.8 376.8 1026.9 387.9C1023.0 399.0 1019.4 410.8 1015.8 423.3C1012.1 435.8 1008.0 447.6 1005.0 462.9C1002.0 478.2 999.7 501.3 997.7 515.0C995.7 528.7 993.9 537.5 993.0 545.0C992.1 552.5 992.6 557.5 992.5 560.0"/><path d="M1044.0 343.0C1040.2 350.5 1027.3 374.5 1021.5 387.9C1015.7 401.3 1013.4 410.8 1009.4 423.3C1005.4 435.8 1000.8 447.6 997.2 462.9C993.6 478.2 989.4 506.3 987.8 515.0"/><path d="M975.5 432.0C974.2 438.3 969.9 456.2 968.0 470.0C966.1 483.8 965.1 501.7 964.4 515.0C963.7 528.3 964.3 540.0 964.0 550.0C963.7 560.0 962.9 569.5 962.5 575.0C962.1 580.5 961.7 581.7 961.5 583.0"/><path d="M978.5 428.0C978.0 435.0 976.5 455.5 975.5 470.0C974.5 484.5 973.3 501.7 972.7 515.0C972.1 528.3 971.9 539.2 972.0 550.0C972.1 560.8 973.2 575.0 973.5 580.0"/><path d="M1133.7 319.2C1128.1 319.3 1111.0 319.3 1100.0 319.6C1089.0 319.9 1073.9 320.6 1068.0 321.0C1062.1 321.4 1064.4 321.7 1064.4 322.3C1064.4 322.9 1062.1 324.0 1068.0 324.4C1073.9 324.8 1089.0 324.8 1100.0 324.8C1111.0 324.8 1128.1 324.5 1133.7 324.4"/><path d="M977.9 571.7C980.3 568.2 983.8 558.1 992.5 550.8C1001.2 543.5 1014.4 534.1 1030.0 527.9C1045.6 521.6 1069.0 516.1 1086.3 513.3C1103.6 510.5 1125.8 511.6 1133.7 511.3"/><path d="M986.3 560.2C990.8 557.1 1001.1 547.4 1013.3 541.5C1025.5 535.6 1044.3 528.4 1059.2 524.8C1074.1 521.1 1090.5 520.6 1102.9 519.6C1115.3 518.6 1128.6 519.1 1133.7 519.0"/><path d="M986.3 563.3C988.1 571.4 993.7 595.9 997.0 612.0C1000.3 628.1 1003.3 644.7 1006.0 660.0C1008.7 675.3 1012.1 696.7 1013.3 704.0"/><path d="M992.5 560.2C994.4 568.5 1000.5 593.4 1004.0 610.0C1007.5 626.6 1010.5 644.7 1013.5 660.0C1016.5 675.3 1020.3 694.8 1021.7 701.7"/><path d="M1013.3 704.0C1018.6 702.7 1034.6 698.3 1045.0 696.0C1055.4 693.7 1065.8 691.6 1075.8 690.4C1085.8 689.2 1095.3 689.0 1105.0 688.6C1114.7 688.2 1128.9 688.3 1133.7 688.3"/><path d="M959.5 617.0C957.9 618.0 952.8 620.8 950.0 623.0C947.2 625.2 944.8 627.2 942.5 630.0C940.2 632.8 937.4 637.3 936.0 640.0C934.6 642.7 934.2 643.9 934.2 646.0C934.2 648.1 935.9 651.8 936.3 652.9"/><path d="M936.3 652.9L970.6 639.4L971.7 619.6"/><path d="M937.0 648.5L969.5 635.5"/><path d="M971.7 619.6C972.4 618.7 974.7 615.9 976.0 614.0C977.3 612.1 978.9 609.4 979.5 608.5"/><path d="M971.5 630.0C972.6 630.5 975.9 630.8 978.0 633.0C980.1 635.2 982.0 638.5 984.0 643.0C986.0 647.5 989.0 657.2 990.0 660.0"/><path d="M958.5 585.0C959.0 584.7 959.9 583.4 961.5 583.0C963.1 582.6 965.8 582.2 968.0 582.5C970.2 582.8 973.4 584.2 974.5 584.5"/><path d="M979.0 572.5C979.2 577.1 979.5 590.6 980.0 600.0C980.5 609.4 980.6 619.6 982.1 628.8C983.6 638.0 986.2 645.6 989.0 655.0C991.8 664.4 996.0 675.5 998.8 685.0C1001.6 694.5 1003.6 703.3 1006.0 712.0C1008.4 720.7 1011.3 728.8 1013.3 737.1C1015.3 745.4 1016.6 754.0 1018.0 762.0C1019.4 770.0 1020.5 773.7 1021.7 785.0C1022.9 796.3 1024.2 814.2 1025.0 830.0C1025.8 845.8 1026.3 863.3 1026.3 880.0C1026.3 896.7 1025.6 914.7 1025.0 930.0C1024.4 945.3 1023.7 957.0 1022.7 972.0C1021.7 987.0 1019.6 1012.0 1019.0 1020.0"/><path d="M1013.3 704.0C1013.8 706.7 1015.0 713.2 1016.0 720.0C1017.0 726.8 1018.3 738.3 1019.0 745.0C1019.7 751.7 1019.5 749.2 1020.3 760.0C1021.0 770.8 1022.8 794.0 1023.5 810.0C1024.2 826.0 1024.5 837.7 1024.5 856.0C1024.5 874.3 1024.1 900.7 1023.5 920.0C1022.9 939.3 1021.9 955.3 1020.7 972.0C1019.5 988.7 1017.2 1012.0 1016.5 1020.0"/><path d="M963.3 640.0C963.3 650.0 963.4 680.0 963.5 700.0C963.6 720.0 963.5 733.3 963.7 760.0C963.9 786.7 964.5 830.0 964.5 860.0C964.5 890.0 964.2 919.2 963.5 940.0C962.8 960.8 960.6 977.5 960.0 985.0"/><path d="M973.5 640.0C973.3 650.0 972.8 675.8 972.5 700.0C972.2 724.2 971.4 763.3 971.7 785.0C972.0 806.7 973.6 810.8 974.5 830.0C975.4 849.2 976.1 878.3 977.0 900.0C977.9 921.7 979.2 940.0 980.0 960.0C980.8 980.0 981.2 1010.0 981.5 1020.0"/><path d="M977.5 632.0C977.3 643.3 976.8 674.5 976.5 700.0C976.2 725.5 975.5 763.3 975.8 785.0C976.1 806.7 977.2 810.8 978.1 830.0C979.0 849.2 980.0 878.3 981.0 900.0C982.0 921.7 983.1 940.0 984.0 960.0C984.9 980.0 986.1 1010.0 986.5 1020.0"/><path d="M996.7 685.0C996.1 690.8 993.9 709.6 993.0 720.0C992.1 730.4 991.6 736.7 991.5 747.5C991.4 758.3 992.2 776.2 992.5 785.0C992.8 793.8 993.3 797.5 993.5 800.0"/><path d="M1001.0 700.0C1001.5 706.7 1003.0 725.0 1004.0 740.0C1005.0 755.0 1006.3 775.0 1007.0 790.0C1007.7 805.0 1007.8 823.3 1008.0 830.0"/><path d="M974.5 793.7C977.1 795.8 984.2 803.0 990.0 806.0C995.8 809.0 1006.2 810.8 1009.4 811.7"/><path d="M975.0 797.0C977.5 799.0 984.3 806.0 990.0 809.0C995.7 812.0 1006.2 814.0 1009.4 815.0"/><path d="M975.0 812.0C977.8 813.7 986.2 819.2 992.0 822.0C997.8 824.8 1006.8 827.8 1009.8 829.0"/><path d="M975.2 827.4C978.0 828.7 986.3 833.0 992.0 835.0C997.7 837.0 1006.5 838.7 1009.4 839.4"/><path d="M975.5 830.0C978.2 831.3 986.4 836.0 992.0 838.0C997.6 840.0 1006.5 841.3 1009.4 842.0"/><path d="M974.5 793.7L975.5 830.0"/><path d="M1009.4 811.7L1009.4 842.0"/><path d="M957.0 762.0C956.7 764.2 955.2 770.3 955.0 775.0C954.8 779.7 955.1 785.8 955.5 790.0C955.9 794.2 957.2 798.3 957.5 800.0"/><path d="M1008.0 842.0C1008.3 848.3 1010.0 867.0 1010.0 880.0C1010.0 893.0 1009.2 909.2 1008.0 920.0C1006.8 930.8 1004.8 937.5 1003.0 945.0C1001.2 952.5 998.0 961.7 997.0 965.0"/><path d="M993.0 842.0C993.3 851.7 994.3 883.7 995.0 900.0C995.7 916.3 996.0 930.0 997.0 940.0C998.0 950.0 1000.3 956.7 1001.0 960.0"/><path d="M978.0 842.0C978.2 851.7 978.5 882.0 979.0 900.0C979.5 918.0 980.2 938.7 981.0 950.0C981.8 961.3 983.5 965.0 984.0 968.0"/><path d="M1003.0 943.0L982.0 987.0L984.0 968.0"/><path d="M1001.5 948.0L983.0 985.0"/><path d="M1000.0 953.0L984.0 983.0"/><path d="M977.0 965.0C978.0 965.5 981.0 967.8 983.0 968.0C985.0 968.2 988.0 966.8 989.0 966.5"/><path d="M960.0 930.0C960.2 935.0 960.3 950.8 961.0 960.0C961.7 969.2 962.2 979.8 964.0 985.0C965.8 990.2 969.3 990.5 972.0 991.0C974.7 991.5 978.7 988.5 980.0 988.0"/><path d="M982.0 987.0C982.3 989.2 983.3 994.5 984.0 1000.0C984.7 1005.5 985.7 1016.7 986.0 1020.0"/><path d="M1003.0 943.0C1002.5 948.3 1001.3 965.5 1000.0 975.0C998.7 984.5 996.3 992.5 995.0 1000.0C993.7 1007.5 992.5 1016.7 992.0 1020.0"/><path d="M1020.3 972.5C1025.2 974.0 1038.4 978.8 1050.0 981.5C1061.6 984.2 1076.0 987.0 1090.0 988.5C1104.0 990.0 1126.4 990.2 1133.7 990.6"/><path d="M1020.3 974.0C1025.2 975.5 1038.4 980.3 1050.0 983.0C1061.6 985.7 1076.0 988.5 1090.0 990.0C1104.0 991.5 1126.4 991.7 1133.7 992.0"/><path d="M1020.3 972.5C1020.9 973.4 1023.4 975.1 1024.0 978.0C1024.6 980.9 1024.3 984.2 1024.0 990.0C1023.7 995.8 1022.3 1008.9 1022.0 1012.7"/><path d="M1021.5 1012.7L1133.7 1012.7"/></g><g transform="translate(2267.4,0) scale(-1,1)"><path d="M955.3 1020.0C955.6 1000.0 956.5 939.2 957.0 900.0C957.5 860.8 958.4 818.3 958.5 785.0C958.6 751.7 957.6 724.2 957.5 700.0C957.4 675.8 957.8 654.7 958.0 640.0C958.2 625.3 958.6 621.2 958.5 612.0C958.4 602.8 958.0 595.3 957.5 585.0C957.0 574.7 955.9 561.7 955.5 550.0C955.1 538.3 955.0 528.3 955.0 515.0C955.0 501.7 955.5 483.5 955.8 470.0C956.1 456.5 956.6 439.8 956.7 433.8"/><path d="M956.7 433.8L959.2 419.2L973.8 396.3"/><path d="M973.8 396.3C976.9 390.7 984.2 373.0 992.5 362.9C1000.8 352.8 1012.0 342.9 1023.8 335.8C1035.6 328.7 1050.1 323.5 1063.3 320.2C1076.5 316.9 1091.2 316.8 1102.9 316.0C1114.6 315.2 1128.6 315.5 1133.7 315.4"/><path d="M957.2 436.0L972.7 398.3"/><path d="M972.7 398.3C977.1 392.2 987.9 371.3 998.8 361.9C1009.7 352.5 1026.4 345.8 1038.3 342.1C1050.2 338.4 1059.0 339.9 1070.0 339.5C1081.0 339.1 1093.4 340.0 1104.0 340.0C1114.6 340.0 1128.8 339.7 1133.7 339.6"/><path d="M975.5 432.0C975.4 430.6 973.3 429.6 974.8 423.3C976.2 417.0 979.5 402.9 984.2 394.2C988.9 385.5 994.9 377.6 1002.9 371.3C1010.9 365.1 1025.8 359.0 1032.1 356.7C1038.3 354.4 1039.0 357.5 1040.4 357.7"/><path d="M1041.5 359.5C1041.8 358.5 1042.1 355.3 1043.0 353.5C1043.9 351.7 1045.1 349.9 1047.0 348.5C1048.9 347.1 1049.8 346.2 1054.5 345.3C1059.2 344.4 1066.9 343.9 1075.0 343.3C1083.1 342.7 1093.1 342.1 1102.9 341.8C1112.7 341.5 1128.6 341.5 1133.7 341.4"/><path d="M1052.9 328.5C1049.8 333.2 1039.8 346.8 1034.2 356.7C1028.7 366.6 1024.1 376.8 1019.6 387.9C1015.1 399.0 1011.3 410.8 1007.1 423.3C1002.9 435.8 998.2 447.6 994.6 462.9C991.0 478.2 987.6 501.3 985.2 515.0C982.9 528.7 981.5 535.5 980.5 545.0C979.5 554.5 979.2 567.5 979.0 572.0"/><path d="M1051.5 330.0C1049.0 334.4 1041.4 347.1 1036.7 356.7C1032.0 366.3 1027.5 376.8 1023.3 387.9C1019.1 399.0 1015.6 410.8 1011.7 423.3C1007.8 435.8 1003.3 447.6 999.8 462.9C996.2 478.2 992.6 501.3 990.4 515.0C988.2 528.7 987.2 537.0 986.5 545.0C985.8 553.0 986.3 560.0 986.3 563.0"/><path d="M1050.0 331.5C1048.2 335.7 1043.2 347.3 1039.4 356.7C1035.6 366.1 1030.8 376.8 1026.9 387.9C1023.0 399.0 1019.4 410.8 1015.8 423.3C1012.1 435.8 1008.0 447.6 1005.0 462.9C1002.0 478.2 999.7 501.3 997.7 515.0C995.7 528.7 993.9 537.5 993.0 545.0C992.1 552.5 992.6 557.5 992.5 560.0"/><path d="M1044.0 343.0C1040.2 350.5 1027.3 374.5 1021.5 387.9C1015.7 401.3 1013.4 410.8 1009.4 423.3C1005.4 435.8 1000.8 447.6 997.2 462.9C993.6 478.2 989.4 506.3 987.8 515.0"/><path d="M975.5 432.0C974.2 438.3 969.9 456.2 968.0 470.0C966.1 483.8 965.1 501.7 964.4 515.0C963.7 528.3 964.3 540.0 964.0 550.0C963.7 560.0 962.9 569.5 962.5 575.0C962.1 580.5 961.7 581.7 961.5 583.0"/><path d="M978.5 428.0C978.0 435.0 976.5 455.5 975.5 470.0C974.5 484.5 973.3 501.7 972.7 515.0C972.1 528.3 971.9 539.2 972.0 550.0C972.1 560.8 973.2 575.0 973.5 580.0"/><path d="M1133.7 319.2C1128.1 319.3 1111.0 319.3 1100.0 319.6C1089.0 319.9 1073.9 320.6 1068.0 321.0C1062.1 321.4 1064.4 321.7 1064.4 322.3C1064.4 322.9 1062.1 324.0 1068.0 324.4C1073.9 324.8 1089.0 324.8 1100.0 324.8C1111.0 324.8 1128.1 324.5 1133.7 324.4"/><path d="M977.9 571.7C980.3 568.2 983.8 558.1 992.5 550.8C1001.2 543.5 1014.4 534.1 1030.0 527.9C1045.6 521.6 1069.0 516.1 1086.3 513.3C1103.6 510.5 1125.8 511.6 1133.7 511.3"/><path d="M986.3 560.2C990.8 557.1 1001.1 547.4 1013.3 541.5C1025.5 535.6 1044.3 528.4 1059.2 524.8C1074.1 521.1 1090.5 520.6 1102.9 519.6C1115.3 518.6 1128.6 519.1 1133.7 519.0"/><path d="M986.3 563.3C988.1 571.4 993.7 595.9 997.0 612.0C1000.3 628.1 1003.3 644.7 1006.0 660.0C1008.7 675.3 1012.1 696.7 1013.3 704.0"/><path d="M992.5 560.2C994.4 568.5 1000.5 593.4 1004.0 610.0C1007.5 626.6 1010.5 644.7 1013.5 660.0C1016.5 675.3 1020.3 694.8 1021.7 701.7"/><path d="M1013.3 704.0C1018.6 702.7 1034.6 698.3 1045.0 696.0C1055.4 693.7 1065.8 691.6 1075.8 690.4C1085.8 689.2 1095.3 689.0 1105.0 688.6C1114.7 688.2 1128.9 688.3 1133.7 688.3"/><path d="M959.5 617.0C957.9 618.0 952.8 620.8 950.0 623.0C947.2 625.2 944.8 627.2 942.5 630.0C940.2 632.8 937.4 637.3 936.0 640.0C934.6 642.7 934.2 643.9 934.2 646.0C934.2 648.1 935.9 651.8 936.3 652.9"/><path d="M936.3 652.9L970.6 639.4L971.7 619.6"/><path d="M937.0 648.5L969.5 635.5"/><path d="M971.7 619.6C972.4 618.7 974.7 615.9 976.0 614.0C977.3 612.1 978.9 609.4 979.5 608.5"/><path d="M971.5 630.0C972.6 630.5 975.9 630.8 978.0 633.0C980.1 635.2 982.0 638.5 984.0 643.0C986.0 647.5 989.0 657.2 990.0 660.0"/><path d="M958.5 585.0C959.0 584.7 959.9 583.4 961.5 583.0C963.1 582.6 965.8 582.2 968.0 582.5C970.2 582.8 973.4 584.2 974.5 584.5"/><path d="M979.0 572.5C979.2 577.1 979.5 590.6 980.0 600.0C980.5 609.4 980.6 619.6 982.1 628.8C983.6 638.0 986.2 645.6 989.0 655.0C991.8 664.4 996.0 675.5 998.8 685.0C1001.6 694.5 1003.6 703.3 1006.0 712.0C1008.4 720.7 1011.3 728.8 1013.3 737.1C1015.3 745.4 1016.6 754.0 1018.0 762.0C1019.4 770.0 1020.5 773.7 1021.7 785.0C1022.9 796.3 1024.2 814.2 1025.0 830.0C1025.8 845.8 1026.3 863.3 1026.3 880.0C1026.3 896.7 1025.6 914.7 1025.0 930.0C1024.4 945.3 1023.7 957.0 1022.7 972.0C1021.7 987.0 1019.6 1012.0 1019.0 1020.0"/><path d="M1013.3 704.0C1013.8 706.7 1015.0 713.2 1016.0 720.0C1017.0 726.8 1018.3 738.3 1019.0 745.0C1019.7 751.7 1019.5 749.2 1020.3 760.0C1021.0 770.8 1022.8 794.0 1023.5 810.0C1024.2 826.0 1024.5 837.7 1024.5 856.0C1024.5 874.3 1024.1 900.7 1023.5 920.0C1022.9 939.3 1021.9 955.3 1020.7 972.0C1019.5 988.7 1017.2 1012.0 1016.5 1020.0"/><path d="M963.3 640.0C963.3 650.0 963.4 680.0 963.5 700.0C963.6 720.0 963.5 733.3 963.7 760.0C963.9 786.7 964.5 830.0 964.5 860.0C964.5 890.0 964.2 919.2 963.5 940.0C962.8 960.8 960.6 977.5 960.0 985.0"/><path d="M973.5 640.0C973.3 650.0 972.8 675.8 972.5 700.0C972.2 724.2 971.4 763.3 971.7 785.0C972.0 806.7 973.6 810.8 974.5 830.0C975.4 849.2 976.1 878.3 977.0 900.0C977.9 921.7 979.2 940.0 980.0 960.0C980.8 980.0 981.2 1010.0 981.5 1020.0"/><path d="M977.5 632.0C977.3 643.3 976.8 674.5 976.5 700.0C976.2 725.5 975.5 763.3 975.8 785.0C976.1 806.7 977.2 810.8 978.1 830.0C979.0 849.2 980.0 878.3 981.0 900.0C982.0 921.7 983.1 940.0 984.0 960.0C984.9 980.0 986.1 1010.0 986.5 1020.0"/><path d="M996.7 685.0C996.1 690.8 993.9 709.6 993.0 720.0C992.1 730.4 991.6 736.7 991.5 747.5C991.4 758.3 992.2 776.2 992.5 785.0C992.8 793.8 993.3 797.5 993.5 800.0"/><path d="M1001.0 700.0C1001.5 706.7 1003.0 725.0 1004.0 740.0C1005.0 755.0 1006.3 775.0 1007.0 790.0C1007.7 805.0 1007.8 823.3 1008.0 830.0"/><path d="M974.5 793.7C977.1 795.8 984.2 803.0 990.0 806.0C995.8 809.0 1006.2 810.8 1009.4 811.7"/><path d="M975.0 797.0C977.5 799.0 984.3 806.0 990.0 809.0C995.7 812.0 1006.2 814.0 1009.4 815.0"/><path d="M975.0 812.0C977.8 813.7 986.2 819.2 992.0 822.0C997.8 824.8 1006.8 827.8 1009.8 829.0"/><path d="M975.2 827.4C978.0 828.7 986.3 833.0 992.0 835.0C997.7 837.0 1006.5 838.7 1009.4 839.4"/><path d="M975.5 830.0C978.2 831.3 986.4 836.0 992.0 838.0C997.6 840.0 1006.5 841.3 1009.4 842.0"/><path d="M974.5 793.7L975.5 830.0"/><path d="M1009.4 811.7L1009.4 842.0"/><path d="M957.0 762.0C956.7 764.2 955.2 770.3 955.0 775.0C954.8 779.7 955.1 785.8 955.5 790.0C955.9 794.2 957.2 798.3 957.5 800.0"/><path d="M1008.0 842.0C1008.3 848.3 1010.0 867.0 1010.0 880.0C1010.0 893.0 1009.2 909.2 1008.0 920.0C1006.8 930.8 1004.8 937.5 1003.0 945.0C1001.2 952.5 998.0 961.7 997.0 965.0"/><path d="M993.0 842.0C993.3 851.7 994.3 883.7 995.0 900.0C995.7 916.3 996.0 930.0 997.0 940.0C998.0 950.0 1000.3 956.7 1001.0 960.0"/><path d="M978.0 842.0C978.2 851.7 978.5 882.0 979.0 900.0C979.5 918.0 980.2 938.7 981.0 950.0C981.8 961.3 983.5 965.0 984.0 968.0"/><path d="M1003.0 943.0L982.0 987.0L984.0 968.0"/><path d="M1001.5 948.0L983.0 985.0"/><path d="M1000.0 953.0L984.0 983.0"/><path d="M977.0 965.0C978.0 965.5 981.0 967.8 983.0 968.0C985.0 968.2 988.0 966.8 989.0 966.5"/><path d="M960.0 930.0C960.2 935.0 960.3 950.8 961.0 960.0C961.7 969.2 962.2 979.8 964.0 985.0C965.8 990.2 969.3 990.5 972.0 991.0C974.7 991.5 978.7 988.5 980.0 988.0"/><path d="M982.0 987.0C982.3 989.2 983.3 994.5 984.0 1000.0C984.7 1005.5 985.7 1016.7 986.0 1020.0"/><path d="M1003.0 943.0C1002.5 948.3 1001.3 965.5 1000.0 975.0C998.7 984.5 996.3 992.5 995.0 1000.0C993.7 1007.5 992.5 1016.7 992.0 1020.0"/><path d="M1020.3 972.5C1025.2 974.0 1038.4 978.8 1050.0 981.5C1061.6 984.2 1076.0 987.0 1090.0 988.5C1104.0 990.0 1126.4 990.2 1133.7 990.6"/><path d="M1020.3 974.0C1025.2 975.5 1038.4 980.3 1050.0 983.0C1061.6 985.7 1076.0 988.5 1090.0 990.0C1104.0 991.5 1126.4 991.7 1133.7 992.0"/><path d="M1020.3 972.5C1020.9 973.4 1023.4 975.1 1024.0 978.0C1024.6 980.9 1024.3 984.2 1024.0 990.0C1023.7 995.8 1022.3 1008.9 1022.0 1012.7"/><path d="M1021.5 1012.7L1133.7 1012.7"/></g><rect x="1127.500" y="316.200" width="13" height="4.500" rx="1.500" fill="#111" stroke="none"/></g>
<g stroke="#f62c2c" stroke-width="1.450" fill="none">
<path d="M1045 297.9L1032.6 409.5"/>
<path d="M1110.4 290.9L1074.2 417.3"/>
<path d="M1180.4 295.5L1117 416.5"/>
<path d="M1250 310.3L1122.8 432.8"/>
<path d="M1304.5 350L1173.4 433.6"/>
<path d="M975.8 330.9L993.3 420.4"/>
<path d="M942 377.2L982 430.1"/>
<path d="M919.4 446L1020.5 499.7"/>
<path d="M915.5 509.8L1001 502"/>
<path d="M915.5 593.5L1014.7 510.6"/>
<path d="M906.5 650.3L1036.5 504"/>
<path d="M1343.7 421.9L1262.8 493.1"/>
<path d="M1346.5 491.2L1255.9 505.2"/>
<path d="M1350.4 560L1255.9 506"/>
<path d="M907.3 733.8L984 584.3"/>
<path d="M907.3 815.5L986.1 597.5"/>
<path d="M907.3 894.3L985.3 775.1"/>
<path d="M914.1 984.6L1140.7 715.5"/>
<path d="M992.5 927.1L936.3 1020"/>
<path d="M987.4 951.8L959.7 1020"/>
<path d="M1359.2 657.1L1283.4 584.7"/>
<path d="M1359.2 736.7L1280.4 597.5"/>
<path d="M1361.3 890.1L1284.7 780.2"/>
<path d="M1353.7 996.5L1281.3 925"/>
<path d="M1282.1 948.4L1328.1 1020"/>
<path d="M1294.9 983.8L1311.1 1020"/>
</g>
<g fill="#b3b3b3" stroke="#2c2c2c" stroke-width="1.500">
<circle cx="1040.2" cy="262.75" r="35.300"/>
<circle cx="1118.3" cy="255.60" r="35.300"/>
<circle cx="1194.2" cy="262.90" r="35.300"/>
<circle cx="1270.75" cy="281.40" r="35.300"/>
<circle cx="1332.9" cy="330.60" r="35.300"/>
<circle cx="967.6" cy="296.10" r="35.300"/>
<circle cx="912.25" cy="356.20" r="35.300"/>
<circle cx="885.8" cy="435.80" r="35.300"/>
<circle cx="880.8" cy="515.10" r="35.300"/>
<circle cx="880.9" cy="594.10" r="35.300"/>
<circle cx="880.9" cy="674.50" r="35.300"/>
<circle cx="880.9" cy="759.90" r="35.300"/>
<circle cx="880.9" cy="839.60" r="35.300"/>
<circle cx="881" cy="919.20" r="35.300"/>
<circle cx="880.7" cy="999.60" r="35.300"/>
<circle cx="1370.6" cy="399.50" r="35.300"/>
<circle cx="1380.25" cy="481.25" r="35.300"/>
<circle cx="1385.4" cy="560.40" r="35.300"/>
<circle cx="1385.25" cy="681.75" r="35.300"/>
<circle cx="1385.25" cy="761.70" r="35.300"/>
<circle cx="1386.75" cy="915.60" r="35.300"/>
<circle cx="1387.05" cy="1008.70" r="35.300"/>
</g>
</svg>
<div style="left:592px;top:177px;width:1073px;height:843px;overflow:hidden"><span class="t" style="left:420.3px;top:74.94px;font-size:18.5px;color:#1c1c1c;letter-spacing:-0.019px;">31/102</span></div>
<div style="left:592px;top:177px;width:1073px;height:843px;overflow:hidden"><span class="t" style="left:508.6px;top:67.84px;font-size:18.5px;color:#1c1c1c;letter-spacing:-0.005px;">31/4</span></div>
<div style="left:592px;top:177px;width:1073px;height:843px;overflow:hidden"><span class="t" style="left:579.2px;top:75.14px;font-size:18.5px;color:#1c1c1c;letter-spacing:0.051px;">31/91</span></div>
<div style="left:592px;top:177px;width:1073px;height:843px;overflow:hidden"><span class="t" style="left:655.8px;top:93.64px;font-size:18.5px;color:#1c1c1c;letter-spacing:0.051px;">31/89</span></div>
<div style="left:592px;top:177px;width:1073px;height:843px;overflow:hidden"><span class="t" style="left:718px;top:142.84px;font-size:18.5px;color:#1c1c1c;letter-spacing:0.051px;">31/88</span></div>
<div style="left:592px;top:177px;width:1073px;height:843px;overflow:hidden"><span class="t" style="left:352.7px;top:108.34px;font-size:18.5px;color:#1c1c1c;letter-spacing:0.051px;">31/44</span></div>
<div style="left:592px;top:177px;width:1073px;height:843px;overflow:hidden"><span class="t" style="left:297.3px;top:168.44px;font-size:18.5px;color:#1c1c1c;letter-spacing:0.051px;">31/70</span></div>
<div style="left:592px;top:177px;width:1073px;height:843px;overflow:hidden"><span class="t" style="left:276.1px;top:248.04px;font-size:18.5px;color:#1c1c1c;letter-spacing:-0.005px;">31/2</span></div>
<div style="left:592px;top:177px;width:1073px;height:843px;overflow:hidden"><span class="t" style="left:265.8px;top:327.34px;font-size:18.5px;color:#1c1c1c;letter-spacing:0.051px;">31/95</span></div>
<div style="left:592px;top:177px;width:1073px;height:843px;overflow:hidden"><span class="t" style="left:265.9px;top:406.34px;font-size:18.5px;color:#1c1c1c;letter-spacing:0.051px;">31/93</span></div>
<div style="left:592px;top:177px;width:1073px;height:843px;overflow:hidden"><span class="t" style="left:265.9px;top:486.74px;font-size:18.5px;color:#1c1c1c;letter-spacing:0.051px;">31/53</span></div>
<div style="left:592px;top:177px;width:1073px;height:843px;overflow:hidden"><span class="t" style="left:265.9px;top:572.14px;font-size:18.5px;color:#1c1c1c;letter-spacing:0.051px;">31/83</span></div>
<div style="left:592px;top:177px;width:1073px;height:843px;overflow:hidden"><span class="t" style="left:271.2px;top:651.84px;font-size:18.5px;color:#1c1c1c;letter-spacing:-0.005px;">31/6</span></div>
<div style="left:592px;top:177px;width:1073px;height:843px;overflow:hidden"><span class="t" style="left:266.1px;top:731.44px;font-size:18.5px;color:#1c1c1c;letter-spacing:0.051px;">31/66</span></div>
<div style="left:592px;top:177px;width:1073px;height:843px;overflow:hidden"><span class="t" style="left:265.8px;top:811.84px;font-size:18.5px;color:#1c1c1c;letter-spacing:0.051px;">31/98</span></div>
<div style="left:592px;top:177px;width:1073px;height:843px;overflow:hidden"><span class="t" style="left:755.6px;top:211.74px;font-size:18.5px;color:#1c1c1c;letter-spacing:0.051px;">31/96</span></div>
<div style="left:592px;top:177px;width:1073px;height:843px;overflow:hidden"><span class="t" style="left:770.5px;top:293.44px;font-size:18.5px;color:#1c1c1c;letter-spacing:-0.005px;">31/1</span></div>
<div style="left:592px;top:177px;width:1073px;height:843px;overflow:hidden"><span class="t" style="left:770.5px;top:372.64px;font-size:18.5px;color:#1c1c1c;letter-spacing:0.051px;">31/94</span></div>
<div style="left:592px;top:177px;width:1073px;height:843px;overflow:hidden"><span class="t" style="left:770.3px;top:493.94px;font-size:18.5px;color:#1c1c1c;letter-spacing:0.051px;">31/84</span></div>
<div style="left:592px;top:177px;width:1073px;height:843px;overflow:hidden"><span class="t" style="left:770.3px;top:573.94px;font-size:18.5px;color:#1c1c1c;letter-spacing:0.051px;">31/10</span></div>
<div style="left:592px;top:177px;width:1073px;height:843px;overflow:hidden"><span class="t" style="left:771.8px;top:727.84px;font-size:18.5px;color:#1c1c1c;letter-spacing:0.051px;">31/67</span></div>
<div style="left:592px;top:177px;width:1073px;height:843px;overflow:hidden"><span class="t" style="left:772.1px;top:820.94px;font-size:18.5px;color:#1c1c1c;letter-spacing:0.051px;">31/48</span></div>
<svg style="left:357px;top:563px" width="6" height="72" viewBox="0 0 6 72"><defs><pattern id="grip" width="3" height="3" patternUnits="userSpaceOnUse"><rect x="0" y="0" width="1.700" height="1.700" fill="#8e8e8e"/></pattern></defs><rect x="0" y="0" width="5" height="71.500" fill="url(#grip)"/></svg>
<!-- FIND -->
<div style="left:1629px;top:179px;width:259.500px;height:57px;border-radius:0 0 6px 6px;box-shadow:0 3px 4px rgba(0,0,0,0.33);overflow:hidden"><div style="left:0;top:0;width:36px;height:57px;background:#c0dcef"></div><div style="left:36px;top:0;width:224px;height:57px;background:#a9c4d8"></div></div>
<div style="left:1620px;top:177px;width:274px;height:2px;background:#1c1c1c"></div>
<div style="left:1640px;top:190px;width:174.500px;height:35.500px;background:#f4f4f4;border:1.500px solid #8a8a8a"></div>
<span class="t" style="left:1648.5px;top:196.96px;font-size:18px;color:#1a1a2a;letter-spacing:-0.512px;">31/53</span>
<svg style="left:1817px;top:203px" width="13" height="9" viewBox="0 0 13 9"><path d="M1 1.500h11l-5.500 6z" fill="#555"/></svg>
<div style="left:1833px;top:190px;width:16.500px;height:33.500px;background:#f0f5fa;border:1.300px solid #5e5e5e"></div>
<svg style="left:1836px;top:201px" width="9" height="12" viewBox="0 0 9 12"><path d="M7.500 1v10l-6-5z" fill="#555"/></svg>
<div style="left:1852.500px;top:190px;width:16.500px;height:33.500px;background:#f0f5fa;border:1.300px solid #5e5e5e"></div>
<svg style="left:1857px;top:201px" width="9" height="12" viewBox="0 0 9 12"><path d="M1.500 1v10l6-5z" fill="#555"/></svg>
<svg style="left:1872px;top:201px" width="13" height="13" viewBox="0 0 13 13"><path d="M2.500 2.500l8 8M10.500 2.500l-8 8" stroke="#333" stroke-width="2.600" fill="none"/></svg>
<!-- VSCROLL -->
<div style="left:1894px;top:177px;width:26px;height:843px;background:#f0f0f0"></div>
<div style="left:1894px;top:178px;width:25px;height:11px;background:#e6e6e6;border:1px solid #b8b8b8"></div>
<div style="left:1896px;top:286px;width:23px;height:25px;background:#cdcdcd"></div>
<svg style="left:1899px;top:197px" width="16" height="12" viewBox="0 0 16 12"><path d="M3 9.500l5-5 5 5" fill="none" stroke="#505050" stroke-width="2.600"/></svg>
<svg style="left:1899px;top:1002px" width="16" height="12" viewBox="0 0 16 12"><path d="M3 2.500l5 5 5-5" fill="none" stroke="#505050" stroke-width="2.600"/></svg>
<!-- TASKBAR -->
<div style="left:0;top:1020px;width:1920px;height:60px;background:linear-gradient(90deg,#24343e 0%,#22303a 30%,#202c36 66%,#262e33 76%,#252d33 88%,#212b33 100%)"></div>
<!-- start -->
<svg style="left:24px;top:1038px" width="24" height="24" viewBox="0 0 25 25">
  <path d="M0 3.500l10.500-1.500v10h-10.500zM12 1.800l13-1.800v12h-13zM0 13.200h10.500v10l-10.500-1.500zM12 13.200h13v11.800l-13-1.800z" fill="#fff"/>
</svg>
<!-- search box -->
<div style="left:73px;top:1021px;width:515px;height:59px;background:#f2f2f2;border:2px solid #d4d4d4;border-bottom:2px solid #d0d0d0"></div>
<svg style="left:89px;top:1037px" width="27" height="27" viewBox="0 0 27 27">
  <circle cx="16.500" cy="10" r="7.800" fill="none" stroke="#111" stroke-width="1.700"/>
  <path d="M11 15.500l-9.500 9.500" stroke="#111" stroke-width="1.900"/>
</svg>
<span class="t" style="left:132.5px;top:1040.53px;font-size:23px;color:#1c1c1c;letter-spacing:-0.378px;">Type here to search</span>
<!-- cortana -->
<svg style="left:610px;top:1036px" width="28" height="28" viewBox="0 0 28 28"><circle cx="14" cy="14" r="10.300" fill="none" stroke="#fff" stroke-width="3"/></svg>
<!-- task view -->
<svg style="left:682px;top:1036px" width="30" height="28" viewBox="0 0 30 28">
  <path d="M2.600 1.900v3.500h15.200v-3.500M2.600 24.900v-3.500h15.200v3.500" stroke="#fff" stroke-width="1.150" fill="none"/>
  <rect x="2.600" y="8.500" width="15.200" height="10.200" fill="none" stroke="#fff" stroke-width="1.150"/>
  <path d="M24.400 1.900v6.300M24.400 12.700v12.200" stroke="#fff" stroke-width="1.150" fill="none"/>
  <rect x="22.900" y="8.900" width="3.100" height="3.100" fill="#fff"/>
</svg>
<!-- edge -->
<svg style="left:756px;top:1033px" width="34" height="34" viewBox="0 0 34 34">
  <path d="M2.500 15.500c1-9 8-13.500 15-13.500 9 0 14.500 7 14 17h-21c0.500 5 4 7.500 9 7.500 4 0 7-1 10-3v6.500c-3 1.800-7 2.500-11 2.500-9 0-14.500-6-14.500-13.500 0-5 3.500-9 7-11 -3 2.500-4.300 5-4.800 7.500h12.800c0-4-2-6.500-6-6.500-5 0-9 3-10.500 6.500z" fill="#1f7fd6"/>
</svg>
<!-- firefox -->
<svg style="left:830px;top:1031px" width="36" height="36" viewBox="0 0 36 36">
  <defs>
    <radialGradient id="ff1" cx="0.720" cy="0.120" r="1"><stop offset="0" stop-color="#fff04a"/><stop offset="0.300" stop-color="#ffa11f"/><stop offset="0.620" stop-color="#ff4a3a"/><stop offset="0.900" stop-color="#e8128c"/></radialGradient>
    <radialGradient id="ff2" cx="0.550" cy="0.350" r="0.700"><stop offset="0" stop-color="#a45cf5"/><stop offset="1" stop-color="#5a2bbf"/></radialGradient>
  </defs>
  <path d="M20.500 1c1.500 2.500 3 3.500 5 5.500 2.500 1 4.500 4 5.500 6.500 3.500 5 3 11.500 0 16 -3 4.500-8 6.500-13.500 6.500 -8.500 0-15.500-6.500-15.500-15.500 0-4 1-7 3-9.500 0 1.500 0.300 2.500 1 3.500 0.500-3 2-5.500 4.500-7 0 1.500 0.500 2.800 1.500 3.800 2-1.500 5-2.300 7-2.300 -0.500-2.500 0-5 1.500-7.500z" fill="url(#ff1)"/>
  <circle cx="17.500" cy="18.500" r="8.800" fill="url(#ff2)"/>
  <path d="M6.500 15.500c2.500-2 5.500-2.300 8-1 1.500 0.800 3 1.200 5 0.500 -1.500 1.500-1.800 2.300-1.800 3.200 -2 1.200-4.500 1.300-6.500-0.200 -1.500-1-3-2-4.700-2.500z" fill="#ff9a20"/>
  <path d="M25.500 6.500c4 3.500 6.500 9 5 15 -1.500 5.500-6 9.500-12.500 10 5.500-1.500 9.500-6 9-12 -0.300-3-2-5.500-3.500-7 1.500-1.500 2-3.500 2-6z" fill="#ffc83a" opacity="0.900"/>
  <path d="M3 21c2 6 7 9.500 13.500 9.500 5 0 9.500-3 11-7.500 -2.500 3-6 4.500-10 4.500 -6 0-11.500-3-14.500-6.500z" fill="#ff3d5a" opacity="0.850"/>
</svg>
<!-- chrome -->
<svg style="left:905px;top:1033px" width="34" height="34" viewBox="-17 -17 34 34">
  <circle r="16.500" fill="#db4437"/>
  <path d="M0 0L-14.290 -8.250A16.500 16.500 0 0 0 -6.800 15.030L0 0z" fill="#0f9d58"/>
  <path d="M0 0L-14.290 -8.250A16.500 16.500 0 0 0 -0.500 16.490z" fill="#0f9d58"/>
  <path d="M0 0L-0.500 16.490A16.500 16.500 0 0 0 15.500 -5.600L0 -1z" fill="#ffcd40"/>
  <path d="M16 -4h-16l-1 4 8 13.500A16.500 16.500 0 0 0 16 -4z" fill="#ffcd40"/>
  <circle r="7.600" fill="#f4f4f4"/>
  <circle r="6" fill="#4285f4"/>
</svg>
<!-- thunderbird -->
<svg style="left:979px;top:1031px" width="38" height="38" viewBox="0 0 38 38">
  <defs><radialGradient id="tb" cx="0.700" cy="0.250" r="0.900"><stop offset="0" stop-color="#3a8ee6"/><stop offset="0.600" stop-color="#1f5cc4"/><stop offset="1" stop-color="#142f8e"/></radialGradient></defs>
  <path d="M10 5.500c4-3.500 10-4.500 15-2.500 2 -0.500 4 0 5 1 -1 0.300-1.500 1-1.500 1.500 5 3.500 7.500 9.500 6 15.500 -1.500 7-7.500 12-14.500 13 1.500-0.800 2.500-1.500 3-2.500 -5 1.500-11 0.500-15-3 -3.500-3-5-7.500-4.500-11.500 0.300-3.500 1.500-6 3-8 1-1.500 2.300-2.500 3.500-3.500z" fill="url(#tb)"/>
  <path d="M4 14c0.500-2 1.500-3.300 2.500-3.800 2.500 2.500 5.500 3.300 8.500 2.300l13-3.500c-0.500 5-2.500 9-5 12l-3 7.500c-4 1.500-9 0.500-12.500-2.500 -2.500-2.500-4-7-3.500-12z" fill="#f4f6fa"/>
  <path d="M8.500 14.500l7 7 12-10" fill="none" stroke="#b4c0d4" stroke-width="0.900"/>
  <path d="M7 25.500c4 3 9 4 13 3l3-6.500c-5 4-11 5-16 3.500z" fill="#dfe6f2"/>
  <path d="M9 5.500c-1.500 2-1.500 4.500-0.500 6l-3.500 2c0-3 1.500-6 4-8z" fill="#1b46b0"/>
  <circle cx="10.500" cy="8" r="0.900" fill="#0a1e5e"/>
</svg>
<!-- file explorer -->
<svg style="left:1056px;top:1035px" width="34" height="30" viewBox="0 0 34 30">
  <path d="M1 3.500c0-1 0.800-1.800 1.800-1.800h10.500c0.800 0 1.300 0.300 1.800 0.900l1.700 2h15c1 0 1.700 0.800 1.700 1.800v4h-32.500z" fill="#dfa21c"/>
  <rect x="1" y="5.200" width="32.500" height="22.300" rx="1.600" fill="#fcd463"/>
  <path d="M1 5.200h13.500l1.500-1.200" fill="none" stroke="#e9b53a" stroke-width="0.800"/>
  <path d="M6.500 28v-10.500c0-1 0.800-1.800 1.800-1.800h16.900c1 0 1.800 0.800 1.800 1.800v10.500h-5.500v-6.500h-9.500v6.500z" fill="#3f93e4"/>
</svg>
<!-- store -->
<svg style="left:1129px;top:1030px" width="38" height="38" viewBox="0 0 38 38">
  <path d="M12.500 12v-3c0-7.500 11-7.500 11 0v3" fill="none" stroke="#f0f0f0" stroke-width="1.400"/>
  <path d="M14.500 12v-3c0-7.500 11-7.500 11 0v3" fill="none" stroke="#f0f0f0" stroke-width="1.400"/>
  <path d="M1 10.700h35.200v22.500c0 1.300-0.800 2.200-2.200 2.200h-30.800c-1.400 0-2.200-0.900-2.200-2.200z" fill="#fdfdfd"/>
  <rect x="11.300" y="16" width="7" height="7" fill="#f35325"/><rect x="19.300" y="16" width="7" height="7" fill="#81bc06"/>
  <rect x="11.300" y="24" width="7" height="7" fill="#05a6f0"/><rect x="19.300" y="24" width="7" height="7" fill="#ffba08"/>
</svg>
<!-- acrobat (active) -->
<div style="left:1187px;top:1020px;width:73px;height:60px;background:#5e6971"></div>
<svg style="left:1205px;top:1031px" width="36" height="36" viewBox="0 0 36 36">
  <defs><linearGradient id="acg" x1="0" y1="0" x2="0.300" y2="1"><stop offset="0" stop-color="#ffffff"/><stop offset="0.600" stop-color="#f4f4f4"/><stop offset="1" stop-color="#d6d6d6"/></linearGradient></defs>
  <path d="M1.500 2l2.500 2v29l-2.500-1.500z" fill="#8e8e8e"/>
  <path d="M4 4h30.500v29h-30.500z" fill="url(#acg)"/>
  <path d="M1.500 2h30.500l2.500 2h-30.500z" fill="#e8121a"/>
  <path d="M4 33h30.500" stroke="#b0b0b0" stroke-width="1"/>
  <path d="M9.500 28c4-4 8-11 8.800-16.500 0.300-2.600-2-2.800-1.900-0.300 0.400 5 6 10.500 12.500 11.800 2.600 0.400 2.600-1.600-0.200-1.600 -6.500 0-14.500 3-18.500 6.600 -2 2 0 3.200-0.700 0z" fill="none" stroke="#c4141a" stroke-width="1.300"/>
</svg>
<!-- running indicators -->
<div style="left:818px;top:1077px;width:61px;height:3px;background:#f6deb6"></div>
<div style="left:893px;top:1077px;width:61px;height:3px;background:#f6deb6"></div>
<div style="left:1043px;top:1077px;width:61px;height:3px;background:#f6deb6"></div>
<div style="left:1187px;top:1077px;width:73px;height:3px;background:#f6deb6"></div>
<!-- tray -->
<svg style="left:1528px;top:1042px" width="22" height="14" viewBox="0 0 22 14"><path d="M2.300 11.800l8.700-9 8.700 9" fill="none" stroke="#fff" stroke-width="1.400"/></svg>
<svg style="left:1561px;top:1038px" width="25" height="24" viewBox="0 0 25 24">
  <rect x="1" y="1" width="16" height="21" rx="2.500" fill="#aeb6be" stroke="#0e0e0e" stroke-width="1.600"/>
  <path d="M5 2v19M9 2v19M13 2v19" stroke="#e8ecf0" stroke-width="1.600"/>
  <circle cx="16.500" cy="14.500" r="6.800" fill="#fff" stroke="#111" stroke-width="1.200"/>
  <path d="M14.300 10.500l6 4 -6 4z" fill="#18c018"/>
</svg>
<svg style="left:1597px;top:1041px" width="26" height="18" viewBox="0 0 26 18">
  <path d="M6.500 17c-3.500 0-5.500-2-5.500-4.500 0-2.500 2-4.300 4.300-4.500 0.700-4 4-6.500 7.700-6.500 3.300 0 6 2 7 5 3 0 5 2.200 5 5 0 3-2.300 5.500-5.500 5.500z" fill="#b4b8bc"/>
  <path d="M5.300 8c2.500-1 5-0.500 7 1l7.700-2.500c3 0 5 2.200 5 5 0 1-0.300 2-0.800 2.800l-11.200-5.300 -11 6c-1.500-2.500-0.500-6 3.300-7z" fill="#d9dbdd"/>
  <path d="M2 15l11-6 11.200 5.300c-1 1.600-2.700 2.700-4.700 2.700h-13c-2 0-3.500-0.800-4.500-2z" fill="#ffffff"/>
</svg>
<svg style="left:1633px;top:1040px" width="27" height="20" viewBox="0 0 27 20">
  <rect x="6.700" y="4.500" width="17.300" height="11.500" fill="none" stroke="#fff" stroke-width="1.200"/>
  <rect x="8.500" y="6.300" width="13.700" height="7.900" fill="#fff"/>
  <rect x="24.500" y="8" width="1.600" height="4.500" fill="#fff"/>
  <path d="M2.300 0.800v3.200M5.700 0.800v3.200M1 4.200h6v2.300c0 1.800-1.300 3-3 3s-3-1.200-3-3zM4 9.500v6.500h2.700" fill="none" stroke="#fff" stroke-width="1.200"/>
</svg>
<svg style="left:1673px;top:1041px" width="24" height="22" viewBox="0 0 24 22">
  <circle cx="17.500" cy="18" r="1.700" fill="#fff"/>
  <path d="M12.300 18a5.200 5.200 0 0 1 5.200-5.200" fill="none" stroke="#fff" stroke-width="1.300"/>
  <path d="M6.700 18a10.800 10.800 0 0 1 10.800-10.800" fill="none" stroke="#f2f2f2" stroke-width="1.300"/>
  <path d="M1 18a16.500 16.500 0 0 1 16.500-16.500" fill="none" stroke="#e4e6e8" stroke-width="1.300"/>
</svg>
<svg style="left:1706px;top:1040px" width="24" height="20" viewBox="0 0 24 20">
  <path d="M1.500 6.500h4l5-5v17l-5-5h-4z" fill="none" stroke="#fff" stroke-width="1.300"/>
  <path d="M14.500 6.500l6.500 7M21 6.500l-6.500 7" stroke="#fff" stroke-width="1.300"/>
</svg>
<span class="t" style="left:1754.5px;top:1028.26px;font-size:18px;color:#fff;letter-spacing:-0.008px;">2:58 AM</span>
<span class="t" style="left:1748px;top:1056.26px;font-size:18px;color:#fff;letter-spacing:0.178px;">1/29/2020</span>
<svg style="left:1857px;top:1037px" width="27" height="26" viewBox="0 0 27 26">
  <path d="M1.700 2h22.300v18.200h-7.300l-3.900 4.600 -3.900-4.600h-7.200z" fill="none" stroke="#fff" stroke-width="1.300"/>
</svg>
<div style="left:1912px;top:1020px;width:1.700px;height:60px;background:#7c858c"></div>

</div>
</body>
</html>
